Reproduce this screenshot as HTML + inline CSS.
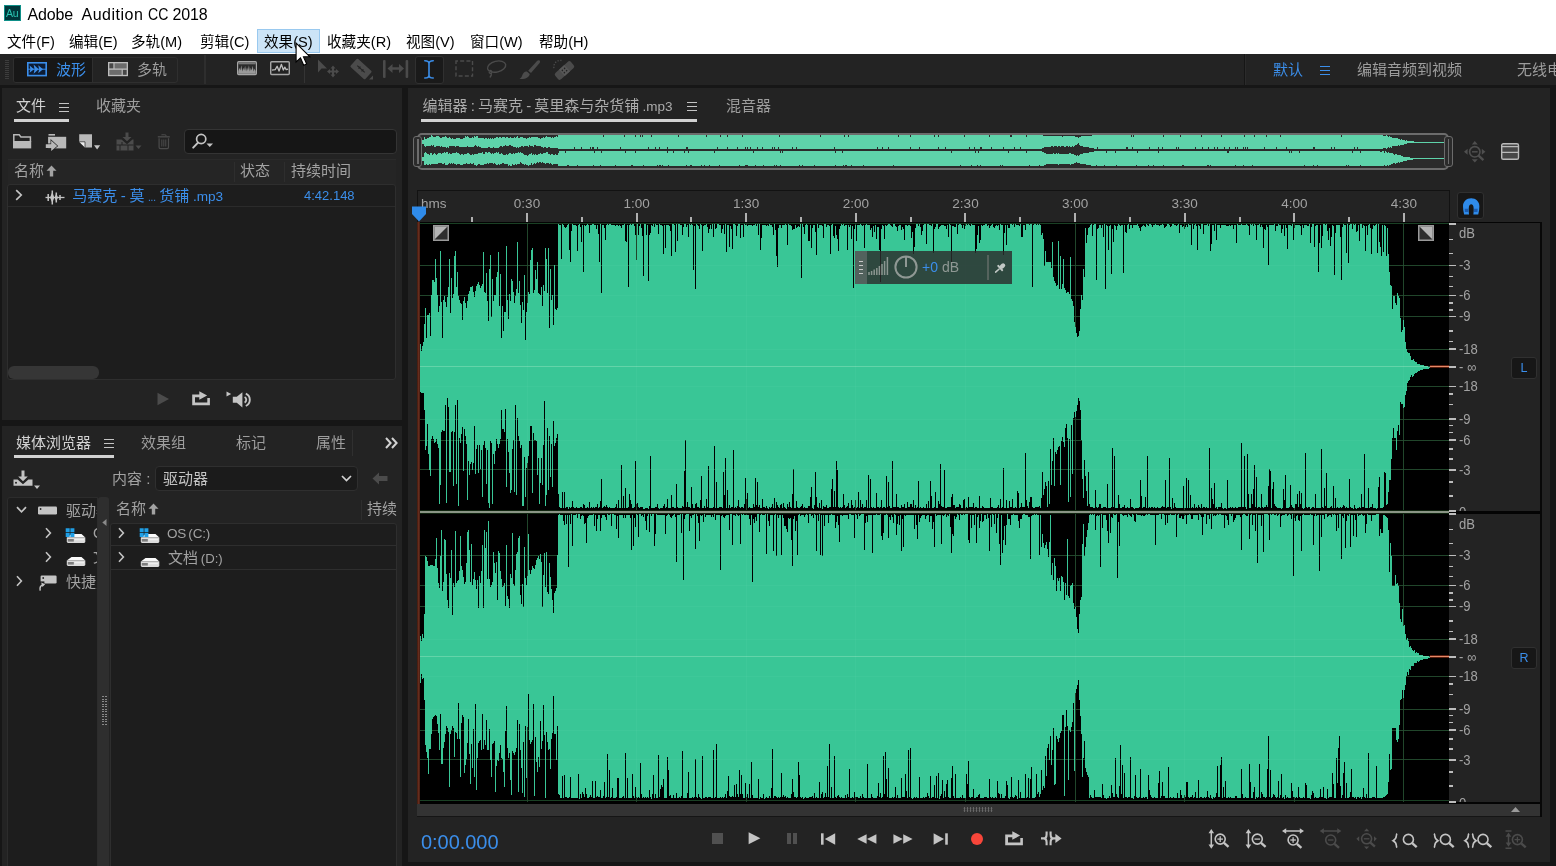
<!DOCTYPE html>
<html lang="zh-CN">
<head>
<meta charset="utf-8">
<title>Adobe Audition CC 2018</title>
<style>
*{box-sizing:border-box;margin:0;padding:0}
html,body{width:1556px;height:866px;overflow:hidden;background:#161616}
body{position:relative;font-family:"Liberation Sans","Noto Sans CJK SC",sans-serif;font-size:14px;color:#a2a2a2}
.a{position:absolute}
.t{position:absolute;white-space:nowrap;line-height:20px;height:20px}
.p{position:absolute;background:#232323}
.blue{color:#3b8eea}
svg{position:absolute;overflow:visible}
.menu .t{font-size:14.6px;color:#000;top:32px}
.tab{font-size:14.5px;color:#a2a2a2}
.hd{font-size:15px;color:#a2a2a2}
.rul .t{top:193.5px;font-size:13.5px;color:#a2a2a2}
.db{font-size:14.5px;color:#a2a2a2;line-height:24px;height:24px;transform:scaleX(0.9);transform-origin:0 50%}
.lat{font-size:13.5px}
</style>
</head>
<body>
<div id="root" style="position:absolute;left:0;top:0;width:1556px;height:866px;will-change:transform">
<!-- ===== title bar + menu ===== -->
<div class="a" id="titlebar" style="left:0;top:0;width:1556px;height:54px;background:#fff"></div>
<div class="a" style="left:3.5px;top:5px;width:17px;height:16px;background:#00363a;border:1px solid #0e8f88"></div>
<div class="t" style="left:6px;top:3px;font-size:10.5px;color:#2bc7b4;letter-spacing:-0.2px">Au</div>
<div class="t" id="title" style="left:0;top:5px;font-size:16px;color:#000;width:220px"><span style="position:absolute;left:27.6px;letter-spacing:-0.2px">Adobe </span><span style="position:absolute;left:81.5px;letter-spacing:0.5px">Audition </span><span style="position:absolute;left:147.6px;display:inline-block;transform:scaleX(0.88);transform-origin:0 50%">CC </span><span style="position:absolute;left:172.6px;letter-spacing:-0.15px">2018</span></div>
<div class="a" style="left:257px;top:29px;width:63px;height:24px;background:#cce4f7;border:1px solid #99c9ef"></div>
<div class="menu">
<div class="t" style="left:7px">文件(F)</div>
<div class="t" style="left:69px">编辑(E)</div>
<div class="t" style="left:131px">多轨(M)</div>
<div class="t" style="left:200px">剪辑(C)</div>
<div class="t" style="left:264px">效果(S)</div>
<div class="t" style="left:327px">收藏夹(R)</div>
<div class="t" style="left:406px">视图(V)</div>
<div class="t" style="left:470px">窗口(W)</div>
<div class="t" style="left:539px">帮助(H)</div>
</div>
<!-- ===== toolbar ===== -->
<div class="p" id="toolbar" style="left:0;top:54px;width:1556px;height:31px"></div>
<!--TOOLBAR-->
<!-- grip -->
<div class="a" style="left:5px;top:60px;width:4px;height:19px;background:repeating-linear-gradient(to bottom,#3d3d3d 0,#3d3d3d 1px,transparent 1px,transparent 2px)"></div>
<!-- view toggle group -->
<div class="a" style="left:13px;top:57px;width:165px;height:26px;border:1px solid #2f2f2f;border-radius:3px;background:#232323"></div>
<div class="a" style="left:14px;top:58px;width:79px;height:24px;background:#171717;border-right:1px solid #2f2f2f;border-radius:2px 0 0 2px"></div>
<svg style="left:26.5px;top:62px" width="20" height="14.4" viewBox="0 0 20 14.4">
 <rect x="0.8" y="0.8" width="18.4" height="12.8" fill="#0d1c33" stroke="#3b8eea" stroke-width="1.6"/>
 <path d="M1 7.2H19" stroke="#3b8eea" stroke-width="1"/>
 <path d="M2.6 3.6L7 7.2L2.6 10.8L3.4 7.2ZM6.6 2.6L11.6 7.2L6.6 11.8L7.6 7.2ZM11.2 3.2L16 7.2L11.2 11.2L12.2 7.2Z" fill="#3b8eea"/>
</svg>
<div class="t blue" style="left:56px;top:60px;font-size:15px">波形</div>
<svg style="left:108.3px;top:62.2px" width="20" height="14.2" viewBox="0 0 20 14.2">
 <rect x="0.65" y="0.65" width="18.7" height="12.9" fill="#6c6c6c" stroke="#bdbdbd" stroke-width="1.3"/>
 <rect x="1.6" y="1.6" width="3.8" height="4.8" fill="#474747"/><rect x="14.8" y="7.8" width="3.6" height="4.8" fill="#474747"/>
 <path d="M1 7.1H19M6 1V7.1M14.2 7.1V13.4" stroke="#bdbdbd" stroke-width="1.1" fill="none"/>
</svg>
<div class="t" style="left:137px;top:60px;font-size:15px;color:#9d9d9d">多轨</div>
<!-- separators -->
<div class="a" style="left:204px;top:55px;width:2px;height:29px;background:#2e2e2e"></div>
<div class="a" style="left:304px;top:57px;width:1px;height:26px;background:#343434"></div>
<!-- spectral frequency display -->
<svg style="left:236.5px;top:61px" width="20" height="14.3" viewBox="0 0 21 15">
 <rect x="0.75" y="0.75" width="19.5" height="13.5" rx="1" fill="#2a2a2a" stroke="#a6a6a6" stroke-width="1.5"/>
 <path d="M1.5 2.5H19.5V11L18.5 8L17.5 11L16.5 5L15.5 10L14.5 7L13.5 11L12.5 4.5L11.5 10L10.5 6.5L9.5 11L8.5 5L7.5 10L6.5 7L5.5 11L4.5 4.5L3.5 10L2.5 7L1.5 11Z" fill="#2a2a2a"/>
 <path d="M1.5 13.5V11L2.5 7L3.5 10L4.5 4.5L5.5 11L6.5 7L7.5 10L8.5 5L9.5 11L10.5 6.5L11.5 10L12.5 4.5L13.5 11L14.5 7L15.5 10L16.5 5L17.5 11L18.5 8L19.5 11V13.5Z" fill="#9a9a9a"/>
 <rect x="1.5" y="1.5" width="18" height="2" fill="#777"/>
</svg>
<!-- spectral pitch display -->
<svg style="left:269.5px;top:61px" width="20" height="14.3" viewBox="0 0 21 15">
 <rect x="0.75" y="0.75" width="19.5" height="13.5" rx="1" fill="#222" stroke="#a6a6a6" stroke-width="1.5"/>
 <path d="M2 9.5L5.5 9L7.5 5.5L9.5 10.5L12 3.5L14 9.5L15.5 6.5L17 9L19 8.5" fill="none" stroke="#bdbdbd" stroke-width="1.4" stroke-linejoin="round"/>
</svg>
<!-- move tool (disabled) -->
<svg style="left:317px;top:59px" width="23" height="19" viewBox="0 0 23 19">
 <path d="M1 0.5L1 13.5L4.5 9.5L10 9.5Z" fill="#4b4b4b"/>
 <path d="M16 6.5L18.5 9.5H17V11.5H19V10L22 12.5L19 15V13.5H17V15.5H18.5L16 18.5L13.5 15.5H15V13.5H13V15L10 12.5L13 10V11.5H15V9.5H13.5Z" fill="#4b4b4b"/>
</svg>
<!-- razor tool (disabled) -->
<svg style="left:351px;top:59px" width="23" height="21" viewBox="0 0 23 21">
 <g transform="rotate(42 10 10)"><rect x="0" y="4.5" width="20" height="11" rx="1.3" fill="#4b4b4b"/><path d="M5 10H15M8 8.6V11.4M12 8.6V11.4" stroke="#232323" stroke-width="1.2"/></g>
 <path d="M22 16.5V20.5H18Z" fill="#4b4b4b"/>
</svg>
<!-- slip tool (disabled) -->
<svg style="left:383px;top:60px" width="26" height="18" viewBox="0 0 26 18">
 <rect x="0" y="0" width="2.6" height="18" rx="1" fill="#4b4b4b"/><rect x="22.6" y="0" width="2.6" height="18" rx="1" fill="#4b4b4b"/>
 <path d="M4.5 8.5L9.5 4V7.3H16V4L21 8.5L16 13V9.7H9.5V13Z" fill="#4b4b4b"/>
</svg>
<!-- time selection tool (active) -->
<div class="a" style="left:415px;top:56px;width:29px;height:28px;background:#1a1a1a;border:1px solid #303030;border-radius:3px"></div>
<svg style="left:424px;top:60px" width="10" height="19" viewBox="0 0 10 19">
 <path d="M0.8 0.8C3.2 0.8 5 1.6 5 3.6C5 1.6 6.8 0.8 9.2 0.8M0.8 18C3.2 18 5 17.2 5 15.2C5 17.2 6.8 18 9.2 18M5 3.4V15.4" fill="none" stroke="#3b8eea" stroke-width="1.6" stroke-linecap="round"/>
</svg>
<!-- marquee (disabled) -->
<svg style="left:455px;top:60px" width="19" height="17" viewBox="0 0 19 17">
 <rect x="1" y="1" width="16.5" height="15" fill="none" stroke="#4b4b4b" stroke-width="1.4" stroke-dasharray="4 2.2" stroke-dashoffset="2"/>
</svg>
<!-- lasso (disabled) -->
<svg style="left:486px;top:60px" width="21" height="19" viewBox="0 0 21 19">
 <ellipse cx="10.6" cy="6.6" rx="9.3" ry="5.4" transform="rotate(-14 10.6 6.6)" fill="none" stroke="#4b4b4b" stroke-width="1.4"/>
 <path d="M3.3 10.6C5 10 6.6 11.4 5.6 12.8C4.6 14 2.8 13 3.3 11.6M5.4 13.2C5.6 15 5 16.5 3.8 17.6" fill="none" stroke="#4b4b4b" stroke-width="1.3"/>
</svg>
<!-- brush (disabled) -->
<svg style="left:519px;top:60px" width="22" height="20" viewBox="0 0 22 20">
 <path d="M20.5 0.5C21.3 1 21.2 2.2 20.6 3L12 13L9.2 10.8L18 1C18.8 0.2 19.8 0 20.5 0.5Z" fill="#4b4b4b"/>
 <path d="M8.2 11.8L10.8 14C10.2 17 7 19.5 0.5 19C3.5 17.5 3 14 5 12.5C6 11.6 7.3 11.3 8.2 11.8Z" fill="#4b4b4b"/>
</svg>
<!-- spot healing (disabled) -->
<svg style="left:552px;top:59px" width="23" height="21" viewBox="0 0 23 21">
 <g transform="rotate(-42 12.5 11.5)"><rect x="2" y="7.2" width="21" height="8.6" rx="2.4" fill="#4b4b4b"/><rect x="9" y="7.2" width="7" height="8.6" fill="#585858"/><circle cx="11" cy="10" r="0.8" fill="#232323"/><circle cx="14" cy="10" r="0.8" fill="#232323"/><circle cx="11" cy="13" r="0.8" fill="#232323"/><circle cx="14" cy="13" r="0.8" fill="#232323"/></g>
 <path d="M9.5 1.5A6.5 6.5 0 0 0 2 9.5" fill="none" stroke="#4b4b4b" stroke-width="1.3" stroke-dasharray="1.3 1.5"/>
</svg>
<!-- workspace switcher -->
<div class="a" style="left:1244px;top:54px;width:1px;height:31px;background:#161616"></div>
<div class="a" style="left:1245px;top:54px;width:1px;height:31px;background:#2b2b2b"></div>
<div class="t blue" style="left:1273px;top:60.3px;font-size:15px">默认</div>
<div class="a" style="left:1320px;top:66px;width:10px;height:9px;border-top:1.6px solid #3b8eea;border-bottom:1.6px solid #3b8eea"></div>
<div class="a" style="left:1320px;top:69.7px;width:10px;height:1.6px;background:#3b8eea"></div>
<div class="t" style="left:1357px;top:60.3px;font-size:15px;color:#9d9d9d">编辑音频到视频</div>
<div class="t" style="left:1517px;top:60.3px;font-size:15px;color:#9d9d9d">无线电</div>
<!--/TOOLBAR-->
<!-- ===== panels ===== -->
<div class="p" id="files" style="left:2px;top:88px;width:400px;height:332px"></div>
<div class="p" id="media" style="left:2px;top:426px;width:400px;height:440px"></div>
<div class="p" id="editor" style="left:408px;top:88px;width:1142px;height:774px"></div>
<!--FILES-->
<!-- tabs -->
<div class="t" style="left:16px;top:96px;font-size:15px;color:#d2d2d2">文件</div>
<div class="a" style="left:59px;top:103px;width:10px;height:9px;border-top:1.8px solid #c4c4c4;border-bottom:1.8px solid #c4c4c4"></div>
<div class="a" style="left:59px;top:106.7px;width:10px;height:1.8px;background:#c4c4c4"></div>
<div class="a" style="left:14px;top:119px;width:55px;height:3px;background:#d2d2d2"></div>
<div class="t" style="left:96px;top:96px;font-size:15px;color:#9d9d9d">收藏夹</div>
<!-- file toolbar -->
<svg style="left:13px;top:134px" width="19" height="15" viewBox="0 0 19 15">
 <path d="M0.8 8V0.8H6.2L7.9 3H17.4V8" fill="none" stroke="#b9b9b9" stroke-width="1.5"/>
 <path d="M0 7H18.2V14.4H0Z" fill="#b9b9b9"/>
</svg>
<svg style="left:45px;top:133px" width="22" height="19" viewBox="0 0 22 19">
 <rect x="3.5" y="1" width="6.5" height="1.6" fill="#b9b9b9"/><path d="M3.1 3.8H21.2V15.4H3.1Z" fill="#b9b9b9"/>
 <path d="M0.8 11.2H6.2V7.4L12.2 13L6.2 18V15H0.8Z" fill="#b9b9b9" stroke="#232323" stroke-width="1.3" paint-order="stroke"/>
</svg>
<svg style="left:79px;top:133.6px" width="23" height="17" viewBox="0 0 23 17">
 <path d="M0.2 0.2H13V13.6H6L0.2 7.8Z" fill="#b9b9b9"/><path d="M0.2 7.8H6V13.6Z" fill="#ececec"/><path d="M0.2 7.8H6V13.6" fill="none" stroke="#232323" stroke-width="0.7"/>
 <path d="M15 11.3H21.2L18.1 15.5Z" fill="#c4c4c4"/>
</svg>
<svg style="left:116px;top:132px" width="26" height="20" viewBox="0 0 26 20">
 <path d="M9.5 0.5H12.5V5H15.5L11 9.2L6.5 5H9.5Z" fill="#4b4b4b"/>
 <path d="M0.5 7.5H5.5L11 12.2L16.5 7.5H17.5V18.5H0.5Z" fill="#4b4b4b"/>
 <path d="M0.5 13H17.5M6 10V13M12 13V18.5M4 13V18.5" stroke="#232323" stroke-width="1"/>
 <path d="M19.5 13.5H25.5L22.5 17Z" fill="#4b4b4b"/>
</svg>
<svg style="left:157.4px;top:134.2px" width="13.6" height="15.4" viewBox="0 0 15 18">
 <path d="M5 1.5C5 0.6 10 0.6 10 1.5V3" fill="none" stroke="#4b4b4b" stroke-width="1.3"/>
 <path d="M0.5 3.3H14.5" stroke="#4b4b4b" stroke-width="1.6"/>
 <path d="M2 5V15.5C2 16.6 2.6 17 3.5 17H11.5C12.4 17 13 16.6 13 15.5V5" fill="none" stroke="#4b4b4b" stroke-width="1.4"/>
 <path d="M5.2 6.5V14.5M7.5 6.5V14.5M9.8 6.5V14.5" stroke="#4b4b4b" stroke-width="1.2"/>
</svg>
<!-- search box -->
<div class="a" style="left:184px;top:129px;width:213px;height:25px;background:#161616;border:1px solid #343434;border-radius:4px"></div>
<svg style="left:192px;top:133px" width="22" height="17" viewBox="0 0 22 17">
 <circle cx="9.2" cy="6" r="4.6" fill="none" stroke="#c4c4c4" stroke-width="1.7"/><path d="M6 9.6L1.2 14.6" stroke="#c4c4c4" stroke-width="2" stroke-linecap="round"/>
 <path d="M14.5 10.5H21L17.75 14Z" fill="#c4c4c4"/>
</svg>
<!-- list header -->
<div class="a" style="left:8px;top:159px;width:388px;height:26px;background:#252525;border-top:1px solid #2a2a2a"></div>
<div class="t hd" style="left:14px;top:161px">名称</div>
<svg style="left:46px;top:165px" width="11" height="12" viewBox="0 0 11 12"><path d="M5.5 0.5L10.5 5.8H7.2V11.5H3.8V5.8H0.5Z" fill="#a2a2a2"/></svg>
<div class="a" style="left:234px;top:162px;width:1px;height:20px;background:#2e2e2e"></div>
<div class="a" style="left:284px;top:162px;width:1px;height:20px;background:#2e2e2e"></div>
<div class="t hd" style="left:240px;top:161px">状态</div>
<div class="t hd" style="left:291px;top:161px">持续时间</div>
<!-- list body -->
<div class="a" style="left:7px;top:184px;width:389px;height:196px;background:#1d1d1d;border:1px solid #2e2e2e;border-radius:3px"></div>
<div class="a" style="left:8px;top:206px;width:387px;height:1px;background:#2b2b2b"></div>
<svg style="left:15px;top:189px" width="8" height="12" viewBox="0 0 8 12"><path d="M1.2 1.2L6.2 6L1.2 10.8" fill="none" stroke="#c4c4c4" stroke-width="1.7"/></svg>
<svg style="left:45px;top:190px" width="20" height="15" viewBox="0 0 20 15">
 <path d="M0.5 7.5H19.5" stroke="#c4c4c4" stroke-width="1.3"/>
 <path d="M3.2 4V11M7.3 0.5V14.5M11.3 2.5V12.5M15 5V10" stroke="#c4c4c4" stroke-width="1.5"/>
 <path d="M5 7.5L7.3 2L9.3 7.5L7.3 13ZM9.5 7.5L11.3 3.5L13 7.5L11.3 11.5Z" fill="#c4c4c4"/>
</svg>
<div class="t blue" style="left:72.3px;top:186px;font-size:15px;word-spacing:-0.6px">马赛克 - 莫 <span style="font-size:10px;letter-spacing:-0.2px">...</span> 货铺 <span style="font-size:13.6px">.mp3</span></div>
<div class="t blue" style="left:304px;top:186px;font-size:13px">4:42.148</div>
<!-- scroll thumb -->
<div class="a" style="left:8px;top:366px;width:91px;height:13px;background:#363636;border-radius:6px"></div>
<!-- preview transport -->
<svg style="left:157px;top:392px" width="13" height="14" viewBox="0 0 13 14"><path d="M0.5 0.8L12 7L0.5 13.2Z" fill="#4b4b4b"/></svg>
<svg style="left:191.6px;top:390.8px" width="19" height="15" viewBox="0 0 19 15"><path d="M0.2 14.2V3.4H7.3V0.2L15.1 4.5L7.3 8.7V6.3H3V11.5H15.3V6.9H17.9V14.2Z" fill="#c4c4c4"/></svg>
<svg style="left:226px;top:391px" width="26" height="17" viewBox="0 0 26 17">
 <path d="M0.5 0.5L5.2 3L0.5 5.5Z" fill="#c4c4c4"/>
 <path d="M6.8 5.8H10.8L16.4 1.2V16.4L10.8 11.8H6.8Z" fill="#c4c4c4"/>
 <path d="M18.6 6A3.2 3.2 0 0 1 18.6 11.6M19.8 2.6A6.8 6.8 0 0 1 19.8 15" fill="none" stroke="#c4c4c4" stroke-width="1.9"/>
</svg>
<!--/FILES-->
<!--MEDIA-->
<!-- tabs -->
<div class="t" style="left:16px;top:433px;font-size:15px;color:#d2d2d2">媒体浏览器</div>
<div class="a" style="left:104px;top:439px;width:10px;height:9px;border-top:1.8px solid #c4c4c4;border-bottom:1.8px solid #c4c4c4"></div>
<div class="a" style="left:104px;top:442.7px;width:10px;height:1.8px;background:#c4c4c4"></div>
<div class="a" style="left:14px;top:455px;width:100px;height:3px;background:#d2d2d2"></div>
<div class="t" style="left:141px;top:433px;font-size:15px;color:#9d9d9d">效果组</div>
<div class="t" style="left:236px;top:433px;font-size:15px;color:#9d9d9d">标记</div>
<div class="t" style="left:316px;top:433px;font-size:15px;color:#9d9d9d">属性</div>
<div class="a" style="left:352px;top:430px;width:1px;height:26px;background:#303030"></div>
<svg style="left:385px;top:437px" width="13" height="12" viewBox="0 0 13 12"><path d="M1 1L5.6 6L1 11M7 1L11.6 6L7 11" fill="none" stroke="#d2d2d2" stroke-width="2"/></svg>
<!-- import / contents row -->
<svg style="left:13px;top:470px" width="28" height="20" viewBox="0 0 28 20">
 <path d="M8.5 0.5H11.5V6.5H14.8L10 11.2L5.2 6.5H8.5Z" fill="#c4c4c4"/>
 <path d="M0.5 9.5H4.6L10 14.2L15.4 9.5H19.5V15.8H0.5Z" fill="#c4c4c4"/><circle cx="3" cy="12.8" r="1" fill="#232323"/>
 <path d="M21 15.5H27L24 19Z" fill="#c4c4c4"/>
</svg>
<div class="t" style="left:112px;top:469px;font-size:15px;color:#a2a2a2">内容 :</div>
<div class="a" style="left:155px;top:466px;width:203px;height:25px;background:#1b1b1b;border:1px solid #2f2f2f;border-radius:4px"></div>
<div class="t" style="left:163px;top:469px;font-size:15px;color:#c4c4c4">驱动器</div>
<svg style="left:341px;top:475px" width="11" height="7" viewBox="0 0 11 7"><path d="M1 1L5.5 5.5L10 1" fill="none" stroke="#d2d2d2" stroke-width="1.7"/></svg>
<svg style="left:372px;top:472px" width="16" height="13" viewBox="0 0 16 13"><path d="M0.5 6.5L7 0.5V4H15.5V9H7V12.5Z" fill="#4b4b4b"/></svg>
<!-- tree -->
<div class="a" style="left:7px;top:497px;width:91px;height:372px;background:#1d1d1d;border:1px solid #2c2c2c;border-radius:3px 0 0 0"></div>
<div class="a" style="left:98px;top:497px;width:11px;height:372px;background:#2e2e2e;border-radius:3px 3px 0 0"></div>
<svg style="left:102px;top:519px" width="5" height="7" viewBox="0 0 5 7"><path d="M4.5 0L4.5 7L0.3 3.5Z" fill="#8a8a8a"/></svg>
<div class="a" style="left:102px;top:696px;width:2px;height:30px;background:repeating-linear-gradient(to bottom,#8a8a8a 0,#8a8a8a 1px,transparent 1px,transparent 2.5px)"></div><div class="a" style="left:105px;top:696px;width:1.5px;height:30px;background:repeating-linear-gradient(to bottom,#8a8a8a 0,#8a8a8a 1px,transparent 1px,transparent 2.5px)"></div>
<svg style="left:16px;top:506px" width="11" height="8" viewBox="0 0 11 8"><path d="M1 1.2L5.5 5.8L10 1.2" fill="none" stroke="#c4c4c4" stroke-width="1.7"/></svg>
<svg style="left:38px;top:505.6px" width="20" height="9" viewBox="0 0 20 9"><rect x="0" y="0.5" width="19" height="8" rx="1.2" fill="#c4c4c4"/><circle cx="2.6" cy="3" r="0.9" fill="#232323"/></svg>
<div class="t" style="left:66px;top:500.5px;font-size:15px;width:31px;overflow:hidden">驱动器</div>
<svg style="left:45px;top:527px" width="7" height="12" viewBox="0 0 7 12"><path d="M1 1.2L5.4 6L1 10.8" fill="none" stroke="#c4c4c4" stroke-width="1.6"/></svg>
<svg style="left:65px;top:528px" width="21" height="15" viewBox="0 0 21 15">
 <path d="M6.5 5.9H16.5L20.3 9.6H1.8Z" fill="#fafafa"/><path d="M1.8 9.6H20.3V13.6Q20.3 15 19 15H3.1Q1.8 15 1.8 13.6Z" fill="#dcdcdc"/><rect x="2.8" y="11" width="6" height="2.6" fill="#7d7d7d"/><rect x="9.5" y="11.2" width="9.5" height="1" fill="#f4f4f4"/>
 <path d="M0.7 0.2H4.7V4.2H0.7ZM5.4 0.2H9.4V4.2H5.4ZM0.7 4.9H4.7V8.9H0.7ZM5.4 4.9H9.4V8.9H5.4Z" fill="#1f9fe6"/>
</svg>
<div class="t" style="left:93px;top:523px;font-size:14.5px;width:4px;overflow:hidden">OS</div>
<svg style="left:45px;top:551px" width="7" height="12" viewBox="0 0 7 12"><path d="M1 1.2L5.4 6L1 10.8" fill="none" stroke="#c4c4c4" stroke-width="1.6"/></svg>
<svg style="left:65px;top:551px" width="21" height="15" viewBox="0 0 21 15">
 <path d="M6.5 5.9H16.5L20.3 9.6H1.8Z" fill="#fafafa"/><path d="M1.8 9.6H20.3V13.6Q20.3 15 19 15H3.1Q1.8 15 1.8 13.6Z" fill="#dcdcdc"/><rect x="2.8" y="11" width="6" height="2.6" fill="#7d7d7d"/><rect x="9.5" y="11.2" width="9.5" height="1" fill="#f4f4f4"/>
</svg>
<div class="t" style="left:93px;top:547px;font-size:15px;width:4px;overflow:hidden">文档</div>
<svg style="left:16px;top:575px" width="7" height="12" viewBox="0 0 7 12"><path d="M1 1.2L5.4 6L1 10.8" fill="none" stroke="#c4c4c4" stroke-width="1.6"/></svg>
<svg style="left:38px;top:575px" width="20" height="17" viewBox="0 0 20 17">
 <rect x="2.6" y="0.6" width="16" height="7.8" rx="1.2" fill="#c4c4c4"/><circle cx="5.2" cy="3" r="0.9" fill="#232323"/>
 <path d="M0.6 6.4H6.4V11H0.6Z" fill="#1d1d1d"/>
 <path d="M2.2 15.6C1.4 12.4 2.6 10 5.6 9.4" fill="none" stroke="#c4c4c4" stroke-width="1.5"/><path d="M3.2 7.4L7.2 9.2L4.4 12Z" fill="#c4c4c4"/>
</svg>
<div class="t" style="left:66px;top:572px;font-size:15px;width:31px;overflow:hidden">快捷方式</div>
<!-- list -->
<div class="t hd" style="left:116px;top:499px">名称</div>
<svg style="left:148px;top:503px" width="11" height="12" viewBox="0 0 11 12"><path d="M5.5 0.5L10.5 5.8H7.2V11.5H3.8V5.8H0.5Z" fill="#a2a2a2"/></svg>
<div class="a" style="left:361px;top:500px;width:1px;height:20px;background:#2e2e2e"></div>
<div class="t hd" style="left:367px;top:499px;width:30px;overflow:hidden">持续时间</div>
<div class="a" style="left:110px;top:522.5px;width:287px;height:347px;background:#1d1d1d;border:1px solid #2e2e2e;border-radius:3px 3px 0 0"></div>
<div class="a" style="left:111px;top:545px;width:285px;height:1px;background:#2e2e2e"></div>
<div class="a" style="left:111px;top:569px;width:285px;height:1px;background:#2e2e2e"></div>
<svg style="left:118px;top:527px" width="7" height="12" viewBox="0 0 7 12"><path d="M1 1.2L5.4 6L1 10.8" fill="none" stroke="#c4c4c4" stroke-width="1.6"/></svg>
<svg style="left:139px;top:528px" width="21" height="15" viewBox="0 0 21 15">
 <path d="M6.5 5.9H16.5L20.3 9.6H1.8Z" fill="#fafafa"/><path d="M1.8 9.6H20.3V13.6Q20.3 15 19 15H3.1Q1.8 15 1.8 13.6Z" fill="#dcdcdc"/><rect x="2.8" y="11" width="6" height="2.6" fill="#7d7d7d"/><rect x="9.5" y="11.2" width="9.5" height="1" fill="#f4f4f4"/>
 <path d="M0.7 0.2H4.7V4.2H0.7ZM5.4 0.2H9.4V4.2H5.4ZM0.7 4.9H4.7V8.9H0.7ZM5.4 4.9H9.4V8.9H5.4Z" fill="#1f9fe6"/>
</svg>
<div class="t" style="left:167px;top:524px;font-size:13.5px;color:#a2a2a2;word-spacing:-1.5px;letter-spacing:-0.15px">OS (C:)</div>
<svg style="left:118px;top:551px" width="7" height="12" viewBox="0 0 7 12"><path d="M1 1.2L5.4 6L1 10.8" fill="none" stroke="#c4c4c4" stroke-width="1.6"/></svg>
<svg style="left:139px;top:552px" width="21" height="15" viewBox="0 0 21 15">
 <path d="M6.5 5.9H16.5L20.3 9.6H1.8Z" fill="#fafafa"/><path d="M1.8 9.6H20.3V13.6Q20.3 15 19 15H3.1Q1.8 15 1.8 13.6Z" fill="#dcdcdc"/><rect x="2.8" y="11" width="6" height="2.6" fill="#7d7d7d"/><rect x="9.5" y="11.2" width="9.5" height="1" fill="#f4f4f4"/>
</svg>
<div class="t" style="left:168px;top:548px;font-size:15px;color:#a2a2a2;word-spacing:-1.4px">文档 <span style="font-size:13.2px">(D:)</span></div>
<!--/MEDIA-->
<!--EDITOR-->
<!-- tabs -->
<div class="t" style="left:422.5px;top:96px;font-size:15px;color:#ababab;word-spacing:-1px">编辑器 : 马赛克 - 莫里森与杂货铺 <span class="lat">.mp3</span></div>
<div class="a" style="left:687px;top:102px;width:10px;height:9px;border-top:1.8px solid #c4c4c4;border-bottom:1.8px solid #c4c4c4"></div>
<div class="a" style="left:687px;top:105.7px;width:10px;height:1.8px;background:#c4c4c4"></div>
<div class="a" style="left:421px;top:119px;width:276px;height:3px;background:#d2d2d2"></div>
<div class="t" style="left:726px;top:96px;font-size:15px;color:#9d9d9d">混音器</div>
<!-- overview navigator -->
<div class="a" style="left:417px;top:133px;width:1032px;height:37px;background:#2b2b2b;border:2px solid #6c6c6c;border-radius:5px"></div>
<svg id="ovw" style="left:0;top:0" width="1556" height="866" viewBox="0 0 1556 866" shape-rendering="crispEdges">
<path d="M421 142.0V140.0 h1V140.0 h1V140.0 h1V137.0 h1V138.5 h1V138.5 h1V138.0 h1V138.0 h1V136.5 h1V136.5 h1V135.0 h1V135.5 h1V136.5 h1V136.5 h1V136.5 h1V136.0 h1V135.5 h1V136.0 h1V136.5 h1V137.5 h1V137.5 h1V137.0 h1V137.0 h1V136.5 h1V136.0 h1V137.0 h1V137.5 h1V137.5 h1V137.0 h1V137.5 h1V139.0 h1V137.5 h1V138.5 h1V138.5 h1V138.5 h1V138.0 h1V138.0 h1V137.5 h1V137.5 h1V138.5 h1V138.5 h1V138.5 h1V138.0 h1V137.5 h1V136.0 h1V136.5 h1V136.0 h1V136.5 h1V138.0 h1V137.5 h1V137.5 h1V137.0 h1V138.0 h1V136.0 h1V137.0 h1V135.5 h1V135.5 h1V137.5 h1V138.0 h1V138.0 h1V138.0 h1V137.5 h1V137.5 h1V138.5 h1V138.0 h1V137.5 h1V138.5 h1V138.0 h1V139.0 h1V137.5 h1V139.0 h1V137.5 h1V138.5 h1V137.5 h1V137.5 h1V136.5 h1V136.5 h1V137.5 h1V136.5 h1V137.0 h1V138.0 h1V137.0 h1V136.5 h1V137.0 h1V138.0 h1V136.5 h1V137.0 h1V137.5 h1V138.0 h1V137.0 h1V137.5 h1V138.0 h1V137.5 h1V136.5 h1V137.5 h1V137.0 h1V136.0 h1V137.5 h1V137.5 h1V137.0 h1V137.0 h1V137.0 h1V137.5 h1V137.5 h1V138.0 h1V138.5 h1V138.0 h1V137.5 h1V137.0 h1V138.0 h1V137.0 h1V137.0 h1V136.5 h1V137.0 h1V137.0 h1V137.0 h1V137.0 h1V137.5 h1V137.5 h1V139.0 h1V138.0 h1V137.5 h1V137.0 h1V137.5 h1V137.0 h1V136.0 h1V137.0 h1V137.0 h1V137.0 h1V136.5 h1V137.5 h1V137.0 h1V137.5 h1V137.0 h1V137.0 h1V136.0 h1V137.0 h1V135.0 h1V135.0 h1V135.0 h1V135.0 h1V135.0 h1V135.0 h1V135.0 h1V135.0 h1V135.0 h1V135.0 h1V135.0 h1V135.0 h1V135.0 h1V135.0 h1V135.0 h1V135.0 h1V135.0 h1V135.0 h1V135.0 h1V135.0 h1V135.0 h1V135.0 h1V135.0 h1V135.0 h1V135.0 h1V135.0 h1V135.0 h1V135.0 h1V135.0 h1V135.0 h1V135.0 h1V135.0 h1V135.0 h1V135.0 h1V135.0 h1V135.0 h1V135.0 h1V135.0 h1V135.0 h1V135.0 h1V135.0 h1V135.0 h1V135.0 h1V135.0 h1V135.0 h1V136.5 h1V135.0 h1V135.0 h1V135.0 h1V135.0 h1V135.0 h1V135.0 h1V135.0 h1V135.0 h1V135.0 h1V135.0 h1V135.0 h1V135.0 h1V135.0 h1V135.0 h1V135.0 h1V135.0 h1V135.0 h1V135.0 h1V135.0 h1V135.0 h1V136.5 h1V135.0 h1V135.0 h1V135.0 h1V135.0 h1V135.0 h1V135.0 h1V135.0 h1V135.0 h1V135.0 h1V135.0 h1V136.5 h1V135.0 h1V135.0 h1V135.0 h1V135.0 h1V136.5 h1V135.0 h1V136.5 h1V135.0 h1V135.0 h1V135.0 h1V135.0 h1V135.0 h1V135.0 h1V135.0 h1V135.0 h1V136.5 h1V135.0 h1V135.0 h1V135.0 h1V135.0 h1V135.0 h1V135.0 h1V135.0 h1V135.0 h1V135.0 h1V135.0 h1V135.0 h1V135.0 h1V135.0 h1V135.0 h1V135.0 h1V135.0 h1V135.0 h1V135.0 h1V135.0 h1V135.0 h1V135.0 h1V135.0 h1V135.0 h1V135.0 h1V135.0 h1V135.0 h1V136.5 h1V135.0 h1V135.0 h1V135.0 h1V135.0 h1V135.0 h1V135.0 h1V135.0 h1V135.0 h1V135.0 h1V135.0 h1V135.0 h1V135.0 h1V135.0 h1V135.0 h1V135.0 h1V135.0 h1V135.0 h1V135.0 h1V135.0 h1V135.0 h1V135.0 h1V135.0 h1V135.0 h1V135.0 h1V135.0 h1V135.0 h1V135.0 h1V136.5 h1V135.0 h1V135.0 h1V135.0 h1V135.0 h1V135.0 h1V135.0 h1V135.0 h1V135.0 h1V135.0 h1V135.0 h1V135.0 h1V135.0 h1V135.0 h1V136.5 h1V135.0 h1V135.0 h1V135.0 h1V135.0 h1V135.0 h1V135.0 h1V136.5 h1V135.0 h1V135.0 h1V135.0 h1V135.0 h1V135.0 h1V135.0 h1V135.0 h1V135.0 h1V135.0 h1V135.0 h1V135.0 h1V135.0 h1V135.0 h1V135.0 h1V136.5 h1V135.0 h1V135.0 h1V135.0 h1V135.0 h1V135.0 h1V135.0 h1V135.0 h1V135.0 h1V135.0 h1V135.0 h1V135.0 h1V135.0 h1V135.0 h1V135.0 h1V135.0 h1V135.0 h1V135.0 h1V135.0 h1V135.0 h1V135.0 h1V135.0 h1V135.0 h1V135.0 h1V135.0 h1V135.0 h1V135.0 h1V135.0 h1V135.0 h1V135.0 h1V135.0 h1V135.0 h1V135.0 h1V135.0 h1V135.0 h1V135.0 h1V135.0 h1V136.5 h1V135.0 h1V135.0 h1V135.0 h1V135.0 h1V135.0 h1V135.0 h1V135.0 h1V135.0 h1V135.0 h1V135.0 h1V135.0 h1V135.0 h1V135.0 h1V135.0 h1V135.0 h1V135.0 h1V135.0 h1V135.0 h1V135.0 h1V135.0 h1V135.0 h1V135.0 h1V135.0 h1V135.0 h1V135.0 h1V135.0 h1V135.0 h1V135.0 h1V135.0 h1V135.0 h1V135.0 h1V135.0 h1V135.0 h1V135.0 h1V135.0 h1V135.0 h1V135.0 h1V135.0 h1V135.0 h1V135.0 h1V136.5 h1V135.0 h1V135.0 h1V135.0 h1V135.0 h1V135.0 h1V135.0 h1V135.0 h1V135.0 h1V135.0 h1V135.0 h1V135.0 h1V135.0 h1V135.0 h1V135.0 h1V135.0 h1V135.0 h1V135.0 h1V135.0 h1V135.0 h1V135.0 h1V135.0 h1V135.0 h1V135.0 h1V136.5 h1V135.0 h1V135.0 h1V135.0 h1V136.5 h1V135.0 h1V135.0 h1V135.0 h1V135.0 h1V135.0 h1V135.0 h1V135.0 h1V135.0 h1V135.0 h1V135.0 h1V135.0 h1V135.0 h1V135.0 h1V135.0 h1V135.0 h1V135.0 h1V135.0 h1V135.0 h1V135.0 h1V135.0 h1V135.0 h1V135.0 h1V135.0 h1V135.0 h1V135.0 h1V135.0 h1V135.0 h1V135.0 h1V135.0 h1V135.0 h1V135.0 h1V135.0 h1V135.0 h1V135.0 h1V135.0 h1V135.0 h1V135.0 h1V135.0 h1V135.0 h1V135.0 h1V135.0 h1V135.0 h1V135.0 h1V135.0 h1V135.0 h1V135.0 h1V135.0 h1V135.0 h1V135.0 h1V136.5 h1V135.0 h1V135.0 h1V135.0 h1V135.0 h1V135.0 h1V135.0 h1V135.0 h1V135.0 h1V135.0 h1V135.0 h1V135.0 h1V136.5 h1V135.0 h1V135.0 h1V135.0 h1V135.0 h1V135.0 h1V135.0 h1V135.0 h1V135.0 h1V135.0 h1V135.0 h1V135.0 h1V135.0 h1V135.0 h1V135.0 h1V135.0 h1V135.0 h1V135.0 h1V135.0 h1V135.0 h1V135.0 h1V135.0 h1V135.0 h1V135.0 h1V136.5 h1V135.0 h1V135.0 h1V135.0 h1V136.5 h1V135.0 h1V135.0 h1V135.0 h1V135.0 h1V135.0 h1V135.0 h1V135.0 h1V135.0 h1V135.0 h1V135.0 h1V135.0 h1V135.0 h1V135.0 h1V135.0 h1V135.0 h1V135.0 h1V135.0 h1V135.0 h1V135.0 h1V135.0 h1V135.0 h1V135.0 h1V135.0 h1V135.0 h1V135.0 h1V136.5 h1V135.0 h1V135.0 h1V135.0 h1V135.0 h1V135.0 h1V135.0 h1V135.0 h1V135.0 h1V135.0 h1V135.0 h1V135.0 h1V135.0 h1V135.0 h1V135.0 h1V135.0 h1V135.0 h1V135.0 h1V135.0 h1V135.0 h1V135.0 h1V135.0 h1V135.0 h1V135.0 h1V135.0 h1V136.5 h1V135.0 h1V135.0 h1V135.0 h1V135.0 h1V135.0 h1V135.0 h1V135.0 h1V135.0 h1V135.0 h1V135.0 h1V135.0 h1V135.0 h1V135.0 h1V135.0 h1V135.0 h1V135.0 h1V135.0 h1V135.0 h1V135.0 h1V135.0 h1V136.5 h1V136.5 h1V135.0 h1V135.0 h1V135.0 h1V135.0 h1V135.0 h1V135.0 h1V135.0 h1V135.0 h1V135.0 h1V135.0 h1V135.0 h1V135.0 h1V135.0 h1V135.0 h1V136.5 h1V135.0 h1V135.0 h1V135.0 h1V135.0 h1V135.0 h1V135.0 h1V135.0 h1V135.0 h1V135.0 h1V135.0 h1V135.0 h1V135.0 h1V135.0 h1V135.0 h1V135.0 h1V135.0 h1V135.5 h1V135.5 h1V136.0 h1V136.0 h1V136.0 h1V136.0 h1V136.0 h1V136.0 h1V136.0 h1V136.0 h1V136.0 h1V136.0 h1V136.0 h1V136.0 h1V136.0 h1V136.0 h1V136.0 h1V136.0 h1V136.0 h1V136.5 h1V136.0 h1V136.0 h1V136.0 h1V136.0 h1V136.0 h1V136.0 h1V136.0 h1V136.0 h1V135.5 h1V136.0 h1V136.0 h1V136.0 h1V136.5 h1V136.5 h1V137.0 h1V137.5 h1V136.5 h1V136.5 h1V136.0 h1V136.0 h1V136.0 h1V136.0 h1V136.0 h1V135.5 h1V135.5 h1V135.5 h1V135.5 h1V135.5 h1V135.5 h1V135.0 h1V135.0 h1V135.0 h1V135.0 h1V135.0 h1V135.0 h1V135.0 h1V135.0 h1V135.0 h1V135.0 h1V135.0 h1V135.0 h1V135.0 h1V135.0 h1V135.0 h1V135.0 h1V135.0 h1V135.0 h1V135.0 h1V135.0 h1V135.0 h1V135.0 h1V135.0 h1V135.0 h1V135.0 h1V135.0 h1V135.0 h1V135.0 h1V135.0 h1V135.0 h1V135.0 h1V135.0 h1V135.0 h1V135.0 h1V135.0 h1V135.0 h1V135.0 h1V135.0 h1V135.0 h1V136.5 h1V135.0 h1V136.5 h1V135.0 h1V135.0 h1V135.0 h1V135.0 h1V135.0 h1V135.0 h1V135.0 h1V135.0 h1V135.0 h1V135.0 h1V135.0 h1V135.0 h1V135.0 h1V135.0 h1V135.0 h1V135.0 h1V135.0 h1V135.0 h1V135.0 h1V135.0 h1V135.0 h1V135.0 h1V135.0 h1V135.0 h1V135.0 h1V135.0 h1V135.0 h1V135.0 h1V135.0 h1V136.5 h1V135.0 h1V135.0 h1V135.0 h1V135.0 h1V135.0 h1V135.0 h1V135.0 h1V135.0 h1V135.0 h1V135.0 h1V135.0 h1V135.0 h1V135.0 h1V135.0 h1V135.0 h1V135.0 h1V136.5 h1V135.0 h1V135.0 h1V135.0 h1V135.0 h1V135.0 h1V135.0 h1V135.0 h1V135.0 h1V135.0 h1V135.0 h1V135.0 h1V135.0 h1V135.0 h1V135.0 h1V135.0 h1V135.0 h1V135.0 h1V135.0 h1V135.0 h1V135.0 h1V136.5 h1V135.0 h1V135.0 h1V135.0 h1V135.0 h1V135.0 h1V135.0 h1V135.0 h1V135.0 h1V135.0 h1V135.0 h1V135.0 h1V135.0 h1V135.0 h1V135.0 h1V135.0 h1V135.0 h1V135.0 h1V135.0 h1V135.0 h1V136.5 h1V135.0 h1V135.0 h1V135.0 h1V135.0 h1V135.0 h1V135.0 h1V135.0 h1V135.0 h1V135.0 h1V135.0 h1V135.0 h1V135.0 h1V135.0 h1V135.0 h1V135.0 h1V135.0 h1V135.0 h1V135.0 h1V135.0 h1V135.0 h1V135.0 h1V135.0 h1V136.5 h1V135.0 h1V135.0 h1V135.0 h1V135.0 h1V135.0 h1V135.0 h1V135.0 h1V135.0 h1V135.0 h1V136.5 h1V135.0 h1V135.0 h1V135.0 h1V135.0 h1V135.0 h1V135.0 h1V135.0 h1V135.0 h1V135.0 h1V135.0 h1V135.0 h1V136.5 h1V135.0 h1V135.0 h1V135.0 h1V135.0 h1V135.0 h1V135.0 h1V135.0 h1V135.0 h1V135.0 h1V135.0 h1V135.0 h1V135.0 h1V135.0 h1V136.5 h1V135.0 h1V135.0 h1V135.0 h1V135.0 h1V135.0 h1V135.0 h1V135.0 h1V135.0 h1V135.0 h1V135.0 h1V135.0 h1V135.0 h1V135.0 h1V135.0 h1V135.0 h1V135.0 h1V135.0 h1V135.0 h1V135.0 h1V135.0 h1V135.0 h1V135.0 h1V135.0 h1V135.0 h1V135.0 h1V135.0 h1V135.0 h1V135.0 h1V135.0 h1V135.0 h1V135.0 h1V135.0 h1V135.0 h1V135.0 h1V135.0 h1V135.0 h1V135.0 h1V135.0 h1V135.0 h1V135.0 h1V135.0 h1V135.0 h1V135.0 h1V135.0 h1V135.0 h1V135.0 h1V135.0 h1V135.0 h1V135.0 h1V135.0 h1V135.0 h1V135.0 h1V135.0 h1V135.0 h1V135.0 h1V135.0 h1V135.0 h1V135.0 h1V135.0 h1V135.0 h1V136.5 h1V135.0 h1V135.0 h1V135.0 h1V135.0 h1V135.0 h1V135.0 h1V135.0 h1V135.0 h1V135.0 h1V135.0 h1V135.0 h1V135.0 h1V135.0 h1V135.0 h1V135.0 h1V135.0 h1V135.0 h1V135.0 h1V135.0 h1V135.0 h1V135.0 h1V135.0 h1V135.0 h1V135.0 h1V135.0 h1V135.0 h1V135.0 h1V135.0 h1V135.0 h1V135.0 h1V135.0 h1V135.0 h1V135.0 h1V135.0 h1V135.0 h1V135.0 h1V135.0 h1V135.0 h1V135.0 h1V135.0 h1V135.0 h1V135.5 h1V136.0 h1V135.5 h1V135.0 h1V136.0 h1V136.5 h1V136.0 h1V136.5 h1V136.5 h1V137.5 h1V137.5 h1V138.0 h1V138.0 h1V138.0 h1V138.0 h1V139.0 h1V138.5 h1V139.5 h1V139.0 h1V139.5 h1V139.5 h1V140.0 h1V140.5 h1V140.0 h1V140.5 h1V140.5 h1V141.0 h1V141.0 h1V141.0 h1V141.0 h1V141.0 h1V141.5 h1V141.5 h1V141.5 h1V141.5 h1V141.5 h1V141.5 h1V141.5 h1V141.5 h1V141.5 h1V141.5 h1V141.5 h1V141.5 h1V141.5 h1V141.5 h1V141.5 h1V141.5 h1V141.5 h1V141.5 h1V141.5 h1V141.5 h1V141.5 h1V141.5 h1V141.5 h1V141.5 h1V141.5 h1V141.5 h1V141.5 h1V141.5 h1V141.5 h1V141.5 h1V142.0V142.5 h-1V142.5 h-1V142.5 h-1V142.5 h-1V142.5 h-1V142.5 h-1V142.5 h-1V142.5 h-1V142.5 h-1V142.5 h-1V142.5 h-1V142.5 h-1V142.5 h-1V142.5 h-1V142.5 h-1V142.5 h-1V142.5 h-1V142.5 h-1V142.5 h-1V142.5 h-1V142.5 h-1V142.5 h-1V142.5 h-1V142.5 h-1V142.5 h-1V142.5 h-1V142.5 h-1V142.5 h-1V142.5 h-1V142.5 h-1V142.5 h-1V143.0 h-1V142.5 h-1V143.0 h-1V143.0 h-1V143.0 h-1V143.0 h-1V143.5 h-1V143.5 h-1V143.5 h-1V144.5 h-1V144.5 h-1V145.0 h-1V144.5 h-1V145.5 h-1V145.0 h-1V145.5 h-1V145.5 h-1V146.0 h-1V146.0 h-1V146.0 h-1V146.0 h-1V147.5 h-1V147.0 h-1V147.5 h-1V147.0 h-1V147.5 h-1V148.5 h-1V148.0 h-1V147.5 h-1V148.0 h-1V148.5 h-1V148.5 h-1V148.5 h-1V148.5 h-1V148.5 h-1V148.5 h-1V148.5 h-1V148.5 h-1V148.5 h-1V148.5 h-1V148.5 h-1V148.5 h-1V148.5 h-1V148.5 h-1V148.5 h-1V148.5 h-1V148.5 h-1V148.5 h-1V148.5 h-1V148.5 h-1V148.5 h-1V148.5 h-1V148.5 h-1V148.5 h-1V148.5 h-1V147.0 h-1V148.5 h-1V148.5 h-1V147.0 h-1V148.5 h-1V148.5 h-1V148.5 h-1V148.5 h-1V148.5 h-1V148.5 h-1V148.5 h-1V148.5 h-1V148.5 h-1V148.5 h-1V148.5 h-1V148.5 h-1V148.5 h-1V148.5 h-1V148.5 h-1V148.5 h-1V148.5 h-1V148.5 h-1V148.5 h-1V147.0 h-1V148.5 h-1V148.5 h-1V147.0 h-1V148.5 h-1V148.5 h-1V148.5 h-1V148.5 h-1V148.5 h-1V148.5 h-1V148.5 h-1V148.5 h-1V148.5 h-1V148.5 h-1V148.5 h-1V148.5 h-1V148.5 h-1V148.5 h-1V148.5 h-1V148.5 h-1V147.0 h-1V147.0 h-1V148.5 h-1V148.5 h-1V148.5 h-1V148.5 h-1V148.5 h-1V148.5 h-1V148.5 h-1V148.5 h-1V148.5 h-1V148.5 h-1V148.5 h-1V148.5 h-1V148.5 h-1V148.5 h-1V148.5 h-1V148.5 h-1V148.5 h-1V148.5 h-1V148.5 h-1V148.5 h-1V148.5 h-1V148.5 h-1V148.5 h-1V148.5 h-1V148.5 h-1V148.5 h-1V147.0 h-1V148.5 h-1V148.5 h-1V148.5 h-1V148.5 h-1V148.5 h-1V148.5 h-1V148.5 h-1V148.5 h-1V148.5 h-1V147.0 h-1V148.5 h-1V148.5 h-1V148.5 h-1V148.5 h-1V148.5 h-1V148.5 h-1V148.5 h-1V148.5 h-1V148.5 h-1V148.5 h-1V148.5 h-1V147.0 h-1V148.5 h-1V148.5 h-1V148.5 h-1V148.5 h-1V148.5 h-1V148.5 h-1V148.5 h-1V148.5 h-1V148.5 h-1V148.5 h-1V148.5 h-1V148.5 h-1V148.5 h-1V148.5 h-1V148.5 h-1V148.5 h-1V147.0 h-1V148.5 h-1V147.0 h-1V148.5 h-1V147.0 h-1V148.5 h-1V148.5 h-1V148.5 h-1V148.5 h-1V148.5 h-1V147.0 h-1V148.5 h-1V147.0 h-1V148.5 h-1V148.5 h-1V148.5 h-1V148.5 h-1V148.5 h-1V147.0 h-1V148.5 h-1V148.5 h-1V148.5 h-1V148.5 h-1V147.0 h-1V148.5 h-1V148.5 h-1V148.5 h-1V148.5 h-1V148.5 h-1V148.5 h-1V147.0 h-1V148.5 h-1V148.5 h-1V147.0 h-1V148.5 h-1V148.5 h-1V148.5 h-1V148.5 h-1V148.5 h-1V147.0 h-1V148.5 h-1V148.5 h-1V148.5 h-1V148.5 h-1V148.5 h-1V147.0 h-1V148.5 h-1V148.5 h-1V148.5 h-1V148.5 h-1V148.5 h-1V148.5 h-1V147.0 h-1V148.5 h-1V148.5 h-1V148.5 h-1V148.5 h-1V148.5 h-1V148.5 h-1V148.5 h-1V148.5 h-1V148.5 h-1V148.5 h-1V148.5 h-1V148.5 h-1V148.5 h-1V148.5 h-1V148.5 h-1V148.5 h-1V147.0 h-1V148.5 h-1V147.0 h-1V148.5 h-1V148.5 h-1V148.5 h-1V148.5 h-1V148.5 h-1V148.5 h-1V148.5 h-1V148.5 h-1V148.5 h-1V148.5 h-1V148.5 h-1V148.5 h-1V148.5 h-1V147.0 h-1V148.5 h-1V148.5 h-1V148.5 h-1V147.0 h-1V148.5 h-1V148.5 h-1V148.5 h-1V148.5 h-1V148.5 h-1V148.5 h-1V148.5 h-1V148.5 h-1V147.0 h-1V148.5 h-1V148.5 h-1V148.5 h-1V148.5 h-1V148.5 h-1V148.5 h-1V148.5 h-1V148.5 h-1V148.5 h-1V148.5 h-1V148.5 h-1V148.5 h-1V148.5 h-1V148.5 h-1V148.5 h-1V148.5 h-1V147.0 h-1V148.5 h-1V148.5 h-1V148.5 h-1V148.5 h-1V147.0 h-1V147.0 h-1V148.5 h-1V148.5 h-1V148.5 h-1V148.5 h-1V148.5 h-1V148.5 h-1V148.5 h-1V148.5 h-1V148.5 h-1V148.5 h-1V148.5 h-1V148.5 h-1V148.5 h-1V148.5 h-1V148.5 h-1V148.5 h-1V148.5 h-1V148.5 h-1V148.5 h-1V148.5 h-1V148.5 h-1V148.5 h-1V148.5 h-1V148.5 h-1V148.5 h-1V148.5 h-1V148.5 h-1V148.5 h-1V147.0 h-1V148.5 h-1V148.5 h-1V148.5 h-1V148.0 h-1V148.0 h-1V148.0 h-1V147.5 h-1V147.5 h-1V147.0 h-1V147.0 h-1V147.0 h-1V146.5 h-1V146.5 h-1V146.5 h-1V146.0 h-1V146.0 h-1V145.5 h-1V144.5 h-1V143.0 h-1V144.0 h-1V145.0 h-1V145.0 h-1V146.0 h-1V146.5 h-1V146.0 h-1V147.0 h-1V146.5 h-1V146.0 h-1V146.5 h-1V146.0 h-1V146.0 h-1V147.0 h-1V146.5 h-1V146.0 h-1V145.5 h-1V146.0 h-1V146.5 h-1V146.0 h-1V146.0 h-1V146.5 h-1V146.0 h-1V146.0 h-1V146.0 h-1V147.0 h-1V146.0 h-1V146.0 h-1V147.0 h-1V146.5 h-1V146.5 h-1V146.5 h-1V146.5 h-1V146.5 h-1V147.0 h-1V147.5 h-1V148.0 h-1V148.5 h-1V148.5 h-1V148.5 h-1V148.5 h-1V148.5 h-1V148.5 h-1V148.5 h-1V148.5 h-1V148.5 h-1V148.5 h-1V148.5 h-1V148.5 h-1V148.5 h-1V148.5 h-1V148.5 h-1V148.5 h-1V148.5 h-1V148.5 h-1V148.5 h-1V148.5 h-1V148.5 h-1V147.0 h-1V148.5 h-1V148.5 h-1V148.5 h-1V148.5 h-1V148.5 h-1V147.0 h-1V148.5 h-1V148.5 h-1V148.5 h-1V148.5 h-1V148.5 h-1V148.5 h-1V148.5 h-1V148.5 h-1V148.5 h-1V148.5 h-1V147.0 h-1V148.5 h-1V148.5 h-1V148.5 h-1V148.5 h-1V148.5 h-1V148.5 h-1V148.5 h-1V148.5 h-1V148.5 h-1V148.5 h-1V148.5 h-1V147.0 h-1V148.5 h-1V148.5 h-1V148.5 h-1V148.5 h-1V148.5 h-1V148.5 h-1V148.5 h-1V148.5 h-1V148.5 h-1V147.0 h-1V147.0 h-1V148.5 h-1V148.5 h-1V148.5 h-1V148.5 h-1V148.5 h-1V147.0 h-1V148.5 h-1V148.5 h-1V148.5 h-1V148.5 h-1V147.0 h-1V148.5 h-1V148.5 h-1V148.5 h-1V148.5 h-1V148.5 h-1V148.5 h-1V148.5 h-1V148.5 h-1V148.5 h-1V148.5 h-1V148.5 h-1V148.5 h-1V148.5 h-1V148.5 h-1V148.5 h-1V148.5 h-1V148.5 h-1V148.5 h-1V148.5 h-1V148.5 h-1V148.5 h-1V148.5 h-1V148.5 h-1V147.0 h-1V148.5 h-1V148.5 h-1V148.5 h-1V148.5 h-1V148.5 h-1V148.5 h-1V147.0 h-1V148.5 h-1V148.5 h-1V148.5 h-1V148.5 h-1V148.5 h-1V148.5 h-1V148.5 h-1V148.5 h-1V148.5 h-1V148.5 h-1V148.5 h-1V148.5 h-1V148.5 h-1V148.5 h-1V148.5 h-1V148.5 h-1V148.5 h-1V148.5 h-1V147.0 h-1V148.5 h-1V148.5 h-1V148.5 h-1V148.5 h-1V148.5 h-1V148.5 h-1V148.5 h-1V148.5 h-1V147.0 h-1V148.5 h-1V148.5 h-1V148.5 h-1V148.5 h-1V148.5 h-1V148.5 h-1V148.5 h-1V148.5 h-1V148.5 h-1V148.5 h-1V148.5 h-1V148.5 h-1V148.5 h-1V148.5 h-1V148.5 h-1V148.5 h-1V148.5 h-1V148.5 h-1V148.5 h-1V148.5 h-1V148.5 h-1V147.0 h-1V148.5 h-1V148.5 h-1V148.5 h-1V148.5 h-1V148.5 h-1V147.0 h-1V148.5 h-1V148.5 h-1V148.5 h-1V148.5 h-1V147.0 h-1V148.5 h-1V148.5 h-1V148.5 h-1V148.5 h-1V148.5 h-1V148.5 h-1V148.5 h-1V148.5 h-1V148.5 h-1V148.5 h-1V148.5 h-1V148.5 h-1V148.5 h-1V148.5 h-1V148.5 h-1V148.5 h-1V148.5 h-1V148.5 h-1V148.5 h-1V148.5 h-1V148.5 h-1V148.5 h-1V148.5 h-1V148.5 h-1V148.5 h-1V148.5 h-1V148.5 h-1V148.5 h-1V148.5 h-1V148.5 h-1V148.5 h-1V148.5 h-1V148.5 h-1V148.5 h-1V148.5 h-1V148.5 h-1V148.5 h-1V148.5 h-1V148.5 h-1V148.5 h-1V148.5 h-1V148.5 h-1V147.0 h-1V148.5 h-1V148.5 h-1V148.5 h-1V148.5 h-1V148.5 h-1V148.5 h-1V148.5 h-1V148.5 h-1V148.5 h-1V148.5 h-1V148.5 h-1V148.5 h-1V148.5 h-1V148.5 h-1V148.5 h-1V148.5 h-1V148.5 h-1V148.5 h-1V148.5 h-1V148.5 h-1V148.5 h-1V148.5 h-1V148.5 h-1V148.5 h-1V148.5 h-1V148.5 h-1V148.5 h-1V148.5 h-1V148.5 h-1V148.5 h-1V148.5 h-1V148.5 h-1V148.5 h-1V148.5 h-1V148.5 h-1V148.5 h-1V148.5 h-1V147.0 h-1V148.5 h-1V148.5 h-1V148.5 h-1V147.0 h-1V148.5 h-1V148.5 h-1V148.5 h-1V148.5 h-1V148.5 h-1V148.5 h-1V148.5 h-1V148.5 h-1V148.5 h-1V148.5 h-1V148.5 h-1V148.5 h-1V148.5 h-1V147.0 h-1V148.5 h-1V148.5 h-1V148.5 h-1V147.0 h-1V148.5 h-1V147.0 h-1V148.5 h-1V148.5 h-1V148.5 h-1V148.5 h-1V148.5 h-1V148.5 h-1V148.5 h-1V148.5 h-1V148.5 h-1V147.0 h-1V148.5 h-1V148.5 h-1V148.5 h-1V148.5 h-1V147.0 h-1V148.5 h-1V148.5 h-1V148.5 h-1V148.5 h-1V148.5 h-1V148.5 h-1V147.0 h-1V148.5 h-1V148.5 h-1V147.0 h-1V148.5 h-1V147.0 h-1V148.5 h-1V148.5 h-1V148.5 h-1V148.5 h-1V148.5 h-1V148.5 h-1V148.5 h-1V147.0 h-1V148.5 h-1V148.5 h-1V148.5 h-1V148.5 h-1V148.5 h-1V148.5 h-1V148.5 h-1V148.5 h-1V148.5 h-1V147.0 h-1V148.5 h-1V148.5 h-1V148.5 h-1V148.5 h-1V148.5 h-1V148.5 h-1V148.5 h-1V148.5 h-1V148.5 h-1V147.0 h-1V148.5 h-1V148.5 h-1V148.5 h-1V148.5 h-1V148.5 h-1V148.5 h-1V148.5 h-1V148.5 h-1V148.5 h-1V148.5 h-1V148.5 h-1V148.5 h-1V148.5 h-1V148.5 h-1V148.5 h-1V148.5 h-1V148.5 h-1V148.5 h-1V148.5 h-1V148.5 h-1V148.5 h-1V148.5 h-1V148.5 h-1V148.5 h-1V148.5 h-1V148.5 h-1V148.5 h-1V148.5 h-1V148.5 h-1V147.0 h-1V147.0 h-1V148.5 h-1V148.5 h-1V148.5 h-1V148.5 h-1V148.5 h-1V148.5 h-1V148.5 h-1V148.5 h-1V148.5 h-1V148.5 h-1V148.5 h-1V148.5 h-1V148.5 h-1V148.5 h-1V148.5 h-1V148.5 h-1V148.5 h-1V148.5 h-1V147.0 h-1V148.5 h-1V148.5 h-1V148.5 h-1V148.5 h-1V148.5 h-1V148.5 h-1V148.5 h-1V147.0 h-1V148.5 h-1V148.5 h-1V148.5 h-1V147.0 h-1V148.5 h-1V148.5 h-1V148.5 h-1V148.5 h-1V148.5 h-1V148.5 h-1V147.0 h-1V148.5 h-1V148.5 h-1V148.5 h-1V148.5 h-1V148.5 h-1V148.5 h-1V148.5 h-1V148.5 h-1V148.5 h-1V148.5 h-1V148.5 h-1V148.5 h-1V148.5 h-1V148.5 h-1V148.5 h-1V148.5 h-1V148.5 h-1V148.5 h-1V148.5 h-1V148.5 h-1V148.5 h-1V148.5 h-1V148.5 h-1V148.5 h-1V148.5 h-1V148.5 h-1V148.5 h-1V147.0 h-1V148.5 h-1V148.5 h-1V148.5 h-1V148.5 h-1V148.5 h-1V148.5 h-1V148.5 h-1V148.5 h-1V148.5 h-1V148.5 h-1V148.5 h-1V148.5 h-1V148.5 h-1V148.5 h-1V148.5 h-1V148.5 h-1V148.5 h-1V148.5 h-1V148.5 h-1V148.5 h-1V148.5 h-1V148.5 h-1V147.0 h-1V148.5 h-1V148.5 h-1V148.5 h-1V147.0 h-1V147.0 h-1V148.5 h-1V147.0 h-1V148.5 h-1V148.5 h-1V148.5 h-1V148.5 h-1V148.5 h-1V148.5 h-1V148.5 h-1V148.5 h-1V147.0 h-1V148.5 h-1V148.5 h-1V148.5 h-1V148.5 h-1V148.5 h-1V148.5 h-1V147.0 h-1V148.5 h-1V148.5 h-1V148.5 h-1V148.5 h-1V148.5 h-1V148.5 h-1V148.5 h-1V148.5 h-1V148.5 h-1V148.5 h-1V148.5 h-1V148.5 h-1V148.5 h-1V148.5 h-1V148.5 h-1V148.5 h-1V148.0 h-1V147.5 h-1V147.5 h-1V147.5 h-1V148.0 h-1V147.5 h-1V147.5 h-1V148.0 h-1V147.0 h-1V146.5 h-1V147.5 h-1V148.0 h-1V147.0 h-1V146.5 h-1V147.5 h-1V147.0 h-1V146.5 h-1V146.0 h-1V145.5 h-1V145.5 h-1V145.5 h-1V146.0 h-1V145.0 h-1V145.0 h-1V146.5 h-1V145.5 h-1V146.0 h-1V145.5 h-1V145.0 h-1V146.5 h-1V145.5 h-1V145.5 h-1V145.5 h-1V145.5 h-1V146.5 h-1V146.0 h-1V146.0 h-1V146.5 h-1V147.0 h-1V147.5 h-1V147.0 h-1V147.5 h-1V147.0 h-1V146.5 h-1V147.0 h-1V146.0 h-1V146.0 h-1V145.0 h-1V145.0 h-1V146.0 h-1V145.5 h-1V146.0 h-1V144.5 h-1V146.0 h-1V146.0 h-1V146.5 h-1V145.5 h-1V146.0 h-1V147.0 h-1V147.5 h-1V147.5 h-1V148.0 h-1V147.5 h-1V147.5 h-1V147.0 h-1V147.5 h-1V148.0 h-1V147.5 h-1V147.0 h-1V147.0 h-1V147.5 h-1V148.0 h-1V148.0 h-1V147.5 h-1V147.5 h-1V148.0 h-1V147.5 h-1V147.0 h-1V146.5 h-1V145.5 h-1V146.5 h-1V146.0 h-1V145.0 h-1V145.5 h-1V147.0 h-1V147.0 h-1V146.5 h-1V147.0 h-1V147.0 h-1V147.0 h-1V146.0 h-1V147.0 h-1V147.0 h-1V147.0 h-1V147.0 h-1V147.0 h-1V147.0 h-1V146.5 h-1V147.0 h-1V146.0 h-1V146.0 h-1V146.0 h-1V146.5 h-1V145.5 h-1V146.0 h-1V146.0 h-1V145.5 h-1V145.5 h-1V146.0 h-1V148.0 h-1V147.0 h-1V148.0 h-1V147.0 h-1V147.0 h-1V147.0 h-1V147.0 h-1V146.0 h-1V146.5 h-1V145.5 h-1V145.5 h-1V146.0 h-1V145.5 h-1V146.5 h-1V146.5 h-1V145.0 h-1V145.5 h-1V144.5 h-1V145.5 h-1V146.0 h-1V145.5 h-1V146.0 h-1V145.5 h-1V146.5 h-1V146.0 h-1V143.5 h-1V143.5 h-1V143.5 h-1Z" fill="#5ed3aa"/>
<path d="M421 158.5V156.5 h1V156.5 h1V156.5 h1V152.5 h1V152.0 h1V152.5 h1V153.5 h1V153.5 h1V154.5 h1V153.0 h1V153.0 h1V154.5 h1V154.0 h1V153.0 h1V153.5 h1V155.0 h1V154.0 h1V153.0 h1V153.0 h1V152.5 h1V153.5 h1V153.0 h1V152.5 h1V151.5 h1V152.5 h1V152.0 h1V151.5 h1V153.5 h1V152.5 h1V154.0 h1V154.0 h1V153.0 h1V152.5 h1V152.5 h1V153.0 h1V151.5 h1V152.5 h1V152.5 h1V154.0 h1V155.0 h1V153.5 h1V154.0 h1V155.0 h1V153.5 h1V154.0 h1V153.5 h1V153.0 h1V152.5 h1V153.5 h1V154.5 h1V155.0 h1V153.5 h1V155.0 h1V153.5 h1V153.5 h1V154.0 h1V154.0 h1V153.0 h1V152.5 h1V152.5 h1V152.5 h1V152.0 h1V153.5 h1V153.5 h1V151.5 h1V152.0 h1V153.0 h1V152.0 h1V152.0 h1V152.5 h1V154.0 h1V153.0 h1V153.5 h1V153.0 h1V153.0 h1V151.5 h1V153.0 h1V152.0 h1V154.0 h1V153.5 h1V153.0 h1V153.5 h1V155.0 h1V154.5 h1V154.5 h1V154.0 h1V154.5 h1V154.0 h1V153.0 h1V153.0 h1V153.5 h1V154.0 h1V152.5 h1V153.5 h1V153.0 h1V153.0 h1V152.5 h1V152.0 h1V153.0 h1V152.0 h1V153.0 h1V153.0 h1V153.5 h1V155.0 h1V155.0 h1V154.5 h1V155.5 h1V155.0 h1V153.5 h1V153.5 h1V153.0 h1V154.5 h1V153.5 h1V155.0 h1V154.0 h1V155.0 h1V154.5 h1V154.0 h1V154.0 h1V152.5 h1V154.0 h1V153.5 h1V152.5 h1V152.5 h1V152.5 h1V152.0 h1V152.0 h1V153.5 h1V154.0 h1V154.5 h1V154.0 h1V154.0 h1V155.0 h1V154.5 h1V153.5 h1V154.5 h1V155.0 h1V152.5 h1V151.0 h1V151.0 h1V151.0 h1V151.0 h1V151.0 h1V151.0 h1V152.5 h1V151.0 h1V151.0 h1V151.0 h1V151.0 h1V151.0 h1V151.0 h1V151.0 h1V151.0 h1V151.0 h1V151.0 h1V151.0 h1V151.0 h1V151.0 h1V151.0 h1V151.0 h1V151.0 h1V151.0 h1V151.0 h1V151.0 h1V151.0 h1V151.0 h1V151.0 h1V151.0 h1V151.0 h1V151.0 h1V151.0 h1V151.0 h1V151.0 h1V152.5 h1V151.0 h1V151.0 h1V151.0 h1V151.0 h1V151.0 h1V151.0 h1V152.5 h1V151.0 h1V151.0 h1V151.0 h1V151.0 h1V151.0 h1V151.0 h1V151.0 h1V151.0 h1V151.0 h1V151.0 h1V151.0 h1V151.0 h1V151.0 h1V151.0 h1V151.0 h1V151.0 h1V151.0 h1V151.0 h1V151.0 h1V151.0 h1V151.0 h1V151.0 h1V151.0 h1V152.5 h1V151.0 h1V151.0 h1V151.0 h1V151.0 h1V151.0 h1V151.0 h1V151.0 h1V151.0 h1V151.0 h1V152.5 h1V151.0 h1V151.0 h1V151.0 h1V151.0 h1V151.0 h1V151.0 h1V151.0 h1V151.0 h1V151.0 h1V151.0 h1V151.0 h1V151.0 h1V151.0 h1V151.0 h1V151.0 h1V151.0 h1V151.0 h1V151.0 h1V151.0 h1V151.0 h1V151.0 h1V151.0 h1V151.0 h1V151.0 h1V151.0 h1V151.0 h1V151.0 h1V151.0 h1V151.0 h1V151.0 h1V151.0 h1V152.5 h1V151.0 h1V151.0 h1V151.0 h1V151.0 h1V151.0 h1V152.5 h1V151.0 h1V151.0 h1V151.0 h1V151.0 h1V151.0 h1V151.0 h1V151.0 h1V151.0 h1V151.0 h1V151.0 h1V152.5 h1V151.0 h1V151.0 h1V151.0 h1V152.5 h1V151.0 h1V151.0 h1V151.0 h1V151.0 h1V151.0 h1V151.0 h1V151.0 h1V151.0 h1V151.0 h1V151.0 h1V151.0 h1V151.0 h1V151.0 h1V151.0 h1V151.0 h1V151.0 h1V151.0 h1V151.0 h1V151.0 h1V151.0 h1V151.0 h1V151.0 h1V151.0 h1V151.0 h1V151.0 h1V152.5 h1V151.0 h1V151.0 h1V151.0 h1V151.0 h1V151.0 h1V151.0 h1V151.0 h1V151.0 h1V151.0 h1V151.0 h1V151.0 h1V151.0 h1V151.0 h1V151.0 h1V151.0 h1V151.0 h1V151.0 h1V151.0 h1V151.0 h1V151.0 h1V151.0 h1V151.0 h1V151.0 h1V151.0 h1V151.0 h1V151.0 h1V151.0 h1V151.0 h1V151.0 h1V151.0 h1V151.0 h1V151.0 h1V151.0 h1V151.0 h1V151.0 h1V151.0 h1V151.0 h1V151.0 h1V152.5 h1V151.0 h1V151.0 h1V151.0 h1V151.0 h1V151.0 h1V151.0 h1V151.0 h1V151.0 h1V151.0 h1V151.0 h1V151.0 h1V151.0 h1V151.0 h1V151.0 h1V151.0 h1V151.0 h1V151.0 h1V151.0 h1V151.0 h1V151.0 h1V151.0 h1V151.0 h1V151.0 h1V151.0 h1V151.0 h1V151.0 h1V152.5 h1V151.0 h1V152.5 h1V151.0 h1V151.0 h1V151.0 h1V151.0 h1V151.0 h1V151.0 h1V151.0 h1V151.0 h1V151.0 h1V151.0 h1V151.0 h1V151.0 h1V151.0 h1V151.0 h1V151.0 h1V151.0 h1V151.0 h1V151.0 h1V151.0 h1V151.0 h1V151.0 h1V151.0 h1V151.0 h1V151.0 h1V151.0 h1V151.0 h1V151.0 h1V151.0 h1V151.0 h1V151.0 h1V151.0 h1V151.0 h1V151.0 h1V151.0 h1V151.0 h1V151.0 h1V151.0 h1V151.0 h1V151.0 h1V151.0 h1V151.0 h1V151.0 h1V151.0 h1V151.0 h1V151.0 h1V151.0 h1V151.0 h1V151.0 h1V151.0 h1V151.0 h1V151.0 h1V151.0 h1V152.5 h1V151.0 h1V151.0 h1V151.0 h1V151.0 h1V151.0 h1V151.0 h1V152.5 h1V151.0 h1V151.0 h1V151.0 h1V151.0 h1V151.0 h1V151.0 h1V151.0 h1V151.0 h1V151.0 h1V151.0 h1V151.0 h1V151.0 h1V151.0 h1V151.0 h1V151.0 h1V151.0 h1V151.0 h1V151.0 h1V151.0 h1V151.0 h1V151.0 h1V151.0 h1V151.0 h1V151.0 h1V151.0 h1V151.0 h1V151.0 h1V151.0 h1V151.0 h1V151.0 h1V151.0 h1V151.0 h1V151.0 h1V151.0 h1V151.0 h1V151.0 h1V151.0 h1V151.0 h1V151.0 h1V151.0 h1V151.0 h1V151.0 h1V151.0 h1V151.0 h1V151.0 h1V151.0 h1V151.0 h1V151.0 h1V151.0 h1V151.0 h1V151.0 h1V151.0 h1V151.0 h1V151.0 h1V151.0 h1V151.0 h1V151.0 h1V151.0 h1V151.0 h1V151.0 h1V151.0 h1V151.0 h1V151.0 h1V151.0 h1V151.0 h1V151.0 h1V151.0 h1V151.0 h1V151.0 h1V151.0 h1V151.0 h1V151.0 h1V151.0 h1V151.0 h1V151.0 h1V151.0 h1V151.0 h1V151.0 h1V151.0 h1V151.0 h1V151.0 h1V151.0 h1V151.0 h1V151.0 h1V151.0 h1V151.0 h1V151.0 h1V151.0 h1V151.0 h1V151.0 h1V151.0 h1V151.0 h1V151.0 h1V151.0 h1V151.0 h1V151.0 h1V151.0 h1V151.0 h1V151.0 h1V151.0 h1V151.0 h1V151.0 h1V151.0 h1V151.0 h1V151.0 h1V151.0 h1V151.0 h1V151.0 h1V152.5 h1V151.0 h1V151.0 h1V151.0 h1V151.0 h1V151.0 h1V151.0 h1V151.0 h1V151.0 h1V151.0 h1V151.0 h1V151.0 h1V151.0 h1V151.0 h1V151.0 h1V151.0 h1V151.0 h1V151.0 h1V151.0 h1V151.0 h1V151.0 h1V151.0 h1V151.0 h1V151.0 h1V152.5 h1V151.0 h1V151.0 h1V152.5 h1V151.0 h1V151.0 h1V151.0 h1V151.0 h1V151.0 h1V151.0 h1V151.0 h1V151.0 h1V151.0 h1V151.0 h1V151.0 h1V151.0 h1V151.0 h1V151.0 h1V151.0 h1V151.0 h1V151.0 h1V151.0 h1V151.0 h1V151.0 h1V151.0 h1V151.0 h1V151.0 h1V151.0 h1V151.0 h1V151.0 h1V151.0 h1V151.0 h1V151.0 h1V152.5 h1V151.0 h1V151.0 h1V151.0 h1V151.0 h1V151.0 h1V151.0 h1V151.0 h1V151.0 h1V151.0 h1V151.0 h1V151.0 h1V151.0 h1V151.0 h1V151.0 h1V151.0 h1V151.0 h1V151.0 h1V152.5 h1V151.0 h1V151.0 h1V151.0 h1V151.0 h1V151.0 h1V151.0 h1V151.0 h1V151.0 h1V151.0 h1V151.0 h1V151.0 h1V151.0 h1V151.0 h1V151.0 h1V151.0 h1V151.5 h1V152.0 h1V152.5 h1V152.5 h1V153.5 h1V153.5 h1V154.0 h1V154.0 h1V153.5 h1V153.5 h1V154.0 h1V153.0 h1V154.0 h1V153.5 h1V153.0 h1V154.0 h1V153.0 h1V154.0 h1V154.0 h1V153.5 h1V153.5 h1V153.5 h1V153.5 h1V154.0 h1V154.0 h1V153.5 h1V153.5 h1V153.0 h1V153.0 h1V154.0 h1V154.0 h1V154.0 h1V154.5 h1V155.0 h1V155.5 h1V155.0 h1V155.5 h1V155.0 h1V154.0 h1V153.5 h1V153.5 h1V153.0 h1V153.0 h1V153.0 h1V153.0 h1V153.0 h1V152.5 h1V152.0 h1V152.0 h1V151.5 h1V151.5 h1V151.5 h1V151.0 h1V151.0 h1V151.0 h1V151.0 h1V151.0 h1V151.0 h1V151.0 h1V151.0 h1V151.0 h1V151.0 h1V151.0 h1V151.0 h1V152.5 h1V151.0 h1V151.0 h1V151.0 h1V151.0 h1V151.0 h1V151.0 h1V151.0 h1V151.0 h1V152.5 h1V151.0 h1V151.0 h1V151.0 h1V151.0 h1V151.0 h1V151.0 h1V151.0 h1V151.0 h1V151.0 h1V151.0 h1V151.0 h1V151.0 h1V151.0 h1V151.0 h1V151.0 h1V151.0 h1V151.0 h1V151.0 h1V151.0 h1V151.0 h1V151.0 h1V152.5 h1V151.0 h1V151.0 h1V151.0 h1V151.0 h1V151.0 h1V151.0 h1V151.0 h1V151.0 h1V151.0 h1V151.0 h1V151.0 h1V151.0 h1V151.0 h1V151.0 h1V151.0 h1V151.0 h1V151.0 h1V151.0 h1V151.0 h1V151.0 h1V152.5 h1V151.0 h1V151.0 h1V151.0 h1V151.0 h1V151.0 h1V151.0 h1V151.0 h1V151.0 h1V151.0 h1V151.0 h1V151.0 h1V151.0 h1V151.0 h1V151.0 h1V151.0 h1V151.0 h1V151.0 h1V151.0 h1V151.0 h1V151.0 h1V151.0 h1V151.0 h1V151.0 h1V151.0 h1V151.0 h1V151.0 h1V151.0 h1V151.0 h1V151.0 h1V151.0 h1V151.0 h1V151.0 h1V151.0 h1V151.0 h1V151.0 h1V151.0 h1V151.0 h1V151.0 h1V151.0 h1V151.0 h1V151.0 h1V151.0 h1V151.0 h1V151.0 h1V151.0 h1V151.0 h1V151.0 h1V151.0 h1V151.0 h1V151.0 h1V151.0 h1V151.0 h1V151.0 h1V151.0 h1V151.0 h1V151.0 h1V151.0 h1V151.0 h1V151.0 h1V151.0 h1V151.0 h1V151.0 h1V151.0 h1V151.0 h1V151.0 h1V151.0 h1V151.0 h1V151.0 h1V152.5 h1V152.5 h1V151.0 h1V151.0 h1V151.0 h1V151.0 h1V151.0 h1V151.0 h1V151.0 h1V151.0 h1V151.0 h1V151.0 h1V151.0 h1V151.0 h1V151.0 h1V151.0 h1V151.0 h1V151.0 h1V151.0 h1V151.0 h1V151.0 h1V151.0 h1V151.0 h1V151.0 h1V151.0 h1V151.0 h1V151.0 h1V151.0 h1V151.0 h1V151.0 h1V151.0 h1V151.0 h1V151.0 h1V151.0 h1V151.0 h1V151.0 h1V151.0 h1V151.0 h1V151.0 h1V151.0 h1V151.0 h1V151.0 h1V151.0 h1V151.0 h1V151.0 h1V151.0 h1V151.0 h1V151.0 h1V151.0 h1V151.0 h1V151.0 h1V151.0 h1V151.0 h1V151.0 h1V151.0 h1V151.0 h1V151.0 h1V151.0 h1V151.0 h1V151.0 h1V151.0 h1V151.0 h1V152.5 h1V151.0 h1V152.5 h1V151.0 h1V151.0 h1V151.0 h1V151.0 h1V151.0 h1V151.0 h1V151.0 h1V152.5 h1V151.0 h1V151.0 h1V151.0 h1V151.0 h1V151.0 h1V151.0 h1V151.0 h1V151.0 h1V151.0 h1V151.0 h1V151.0 h1V151.0 h1V151.0 h1V151.0 h1V151.0 h1V151.0 h1V151.0 h1V151.0 h1V151.0 h1V151.0 h1V151.0 h1V151.0 h1V151.0 h1V151.0 h1V151.0 h1V151.0 h1V151.0 h1V151.0 h1V151.0 h1V151.0 h1V151.0 h1V151.0 h1V151.0 h1V151.0 h1V151.0 h1V151.0 h1V151.0 h1V151.0 h1V151.0 h1V151.0 h1V151.0 h1V151.0 h1V151.0 h1V151.0 h1V151.0 h1V151.0 h1V151.0 h1V151.0 h1V151.0 h1V151.0 h1V151.0 h1V151.0 h1V152.5 h1V151.0 h1V151.0 h1V151.0 h1V151.0 h1V151.0 h1V151.0 h1V151.0 h1V152.5 h1V151.0 h1V151.0 h1V151.0 h1V151.0 h1V151.0 h1V151.0 h1V151.0 h1V151.0 h1V151.0 h1V151.0 h1V151.0 h1V151.0 h1V151.0 h1V151.0 h1V151.0 h1V151.0 h1V151.0 h1V151.0 h1V151.0 h1V151.5 h1V151.5 h1V151.0 h1V151.0 h1V152.5 h1V151.0 h1V151.5 h1V152.5 h1V151.5 h1V152.5 h1V152.5 h1V153.0 h1V153.0 h1V154.0 h1V154.5 h1V153.5 h1V154.0 h1V154.5 h1V155.0 h1V154.5 h1V155.0 h1V155.5 h1V155.5 h1V156.5 h1V156.5 h1V156.5 h1V156.5 h1V157.0 h1V157.0 h1V157.0 h1V157.5 h1V157.5 h1V157.5 h1V158.0 h1V158.0 h1V158.0 h1V158.0 h1V158.0 h1V158.0 h1V158.0 h1V158.0 h1V158.0 h1V158.0 h1V158.0 h1V158.0 h1V158.0 h1V158.0 h1V158.0 h1V158.0 h1V158.0 h1V158.0 h1V158.0 h1V158.0 h1V158.0 h1V158.0 h1V158.0 h1V158.0 h1V158.0 h1V158.0 h1V158.0 h1V158.0 h1V158.0 h1V158.0 h1V158.0 h1V158.5V159.0 h-1V159.0 h-1V159.0 h-1V159.0 h-1V159.0 h-1V159.0 h-1V159.0 h-1V159.0 h-1V159.0 h-1V159.0 h-1V159.0 h-1V159.0 h-1V159.0 h-1V159.0 h-1V159.0 h-1V159.0 h-1V159.0 h-1V159.0 h-1V159.0 h-1V159.0 h-1V159.0 h-1V159.0 h-1V159.0 h-1V159.0 h-1V159.0 h-1V159.0 h-1V159.0 h-1V159.0 h-1V159.0 h-1V159.0 h-1V159.0 h-1V159.5 h-1V159.5 h-1V159.5 h-1V160.0 h-1V160.0 h-1V160.0 h-1V160.5 h-1V160.5 h-1V160.5 h-1V160.5 h-1V161.5 h-1V161.5 h-1V162.0 h-1V162.5 h-1V162.0 h-1V162.5 h-1V163.0 h-1V163.5 h-1V162.5 h-1V163.0 h-1V164.0 h-1V164.0 h-1V164.5 h-1V164.5 h-1V165.5 h-1V164.5 h-1V165.5 h-1V166.0 h-1V164.5 h-1V166.0 h-1V166.0 h-1V165.5 h-1V165.5 h-1V166.0 h-1V166.0 h-1V166.0 h-1V166.0 h-1V166.0 h-1V166.0 h-1V166.0 h-1V166.0 h-1V166.0 h-1V166.0 h-1V166.0 h-1V166.0 h-1V166.0 h-1V166.0 h-1V166.0 h-1V166.0 h-1V166.0 h-1V166.0 h-1V166.0 h-1V164.5 h-1V166.0 h-1V166.0 h-1V166.0 h-1V166.0 h-1V166.0 h-1V166.0 h-1V166.0 h-1V166.0 h-1V166.0 h-1V166.0 h-1V166.0 h-1V164.5 h-1V166.0 h-1V164.5 h-1V166.0 h-1V166.0 h-1V166.0 h-1V166.0 h-1V166.0 h-1V166.0 h-1V166.0 h-1V166.0 h-1V166.0 h-1V166.0 h-1V166.0 h-1V166.0 h-1V166.0 h-1V166.0 h-1V166.0 h-1V166.0 h-1V166.0 h-1V166.0 h-1V166.0 h-1V166.0 h-1V166.0 h-1V166.0 h-1V166.0 h-1V166.0 h-1V166.0 h-1V166.0 h-1V166.0 h-1V166.0 h-1V164.5 h-1V166.0 h-1V166.0 h-1V166.0 h-1V164.5 h-1V166.0 h-1V166.0 h-1V166.0 h-1V166.0 h-1V166.0 h-1V166.0 h-1V166.0 h-1V166.0 h-1V164.5 h-1V166.0 h-1V166.0 h-1V166.0 h-1V166.0 h-1V166.0 h-1V166.0 h-1V166.0 h-1V166.0 h-1V166.0 h-1V166.0 h-1V166.0 h-1V166.0 h-1V166.0 h-1V166.0 h-1V166.0 h-1V166.0 h-1V166.0 h-1V166.0 h-1V166.0 h-1V166.0 h-1V166.0 h-1V166.0 h-1V166.0 h-1V166.0 h-1V166.0 h-1V166.0 h-1V166.0 h-1V166.0 h-1V166.0 h-1V166.0 h-1V166.0 h-1V166.0 h-1V166.0 h-1V166.0 h-1V166.0 h-1V166.0 h-1V166.0 h-1V166.0 h-1V166.0 h-1V166.0 h-1V166.0 h-1V166.0 h-1V166.0 h-1V166.0 h-1V166.0 h-1V166.0 h-1V166.0 h-1V166.0 h-1V166.0 h-1V166.0 h-1V166.0 h-1V164.5 h-1V166.0 h-1V166.0 h-1V166.0 h-1V166.0 h-1V166.0 h-1V166.0 h-1V166.0 h-1V166.0 h-1V164.5 h-1V166.0 h-1V166.0 h-1V166.0 h-1V166.0 h-1V166.0 h-1V166.0 h-1V166.0 h-1V164.5 h-1V166.0 h-1V166.0 h-1V166.0 h-1V166.0 h-1V166.0 h-1V166.0 h-1V166.0 h-1V166.0 h-1V166.0 h-1V166.0 h-1V166.0 h-1V166.0 h-1V166.0 h-1V166.0 h-1V166.0 h-1V166.0 h-1V166.0 h-1V166.0 h-1V166.0 h-1V166.0 h-1V166.0 h-1V166.0 h-1V166.0 h-1V166.0 h-1V164.5 h-1V166.0 h-1V164.5 h-1V164.5 h-1V166.0 h-1V166.0 h-1V166.0 h-1V166.0 h-1V166.0 h-1V166.0 h-1V166.0 h-1V166.0 h-1V166.0 h-1V166.0 h-1V166.0 h-1V166.0 h-1V166.0 h-1V166.0 h-1V166.0 h-1V166.0 h-1V166.0 h-1V166.0 h-1V166.0 h-1V166.0 h-1V166.0 h-1V166.0 h-1V166.0 h-1V164.5 h-1V164.5 h-1V166.0 h-1V166.0 h-1V166.0 h-1V166.0 h-1V166.0 h-1V166.0 h-1V166.0 h-1V166.0 h-1V166.0 h-1V166.0 h-1V166.0 h-1V166.0 h-1V166.0 h-1V166.0 h-1V166.0 h-1V166.0 h-1V166.0 h-1V166.0 h-1V164.5 h-1V166.0 h-1V166.0 h-1V166.0 h-1V166.0 h-1V166.0 h-1V166.0 h-1V166.0 h-1V166.0 h-1V166.0 h-1V164.5 h-1V166.0 h-1V166.0 h-1V166.0 h-1V166.0 h-1V164.5 h-1V166.0 h-1V166.0 h-1V166.0 h-1V166.0 h-1V166.0 h-1V166.0 h-1V166.0 h-1V166.0 h-1V166.0 h-1V166.0 h-1V166.0 h-1V164.5 h-1V166.0 h-1V166.0 h-1V166.0 h-1V166.0 h-1V166.0 h-1V166.0 h-1V166.0 h-1V166.0 h-1V166.0 h-1V166.0 h-1V166.0 h-1V166.0 h-1V166.0 h-1V166.0 h-1V166.0 h-1V166.0 h-1V166.0 h-1V166.0 h-1V166.0 h-1V164.5 h-1V166.0 h-1V166.0 h-1V166.0 h-1V166.0 h-1V166.0 h-1V166.0 h-1V166.0 h-1V166.0 h-1V166.0 h-1V166.0 h-1V166.0 h-1V164.5 h-1V166.0 h-1V166.0 h-1V166.0 h-1V166.0 h-1V166.0 h-1V166.0 h-1V166.0 h-1V164.5 h-1V166.0 h-1V166.0 h-1V165.5 h-1V165.5 h-1V165.5 h-1V165.0 h-1V165.0 h-1V165.0 h-1V164.5 h-1V164.5 h-1V164.0 h-1V164.0 h-1V164.0 h-1V163.5 h-1V164.0 h-1V163.5 h-1V162.5 h-1V162.5 h-1V162.5 h-1V162.0 h-1V162.5 h-1V163.0 h-1V163.5 h-1V163.5 h-1V163.5 h-1V164.5 h-1V164.0 h-1V164.0 h-1V163.5 h-1V163.5 h-1V163.5 h-1V163.5 h-1V164.0 h-1V163.5 h-1V164.0 h-1V163.5 h-1V163.5 h-1V164.5 h-1V163.5 h-1V164.0 h-1V164.0 h-1V163.5 h-1V164.0 h-1V163.5 h-1V164.0 h-1V164.0 h-1V163.5 h-1V163.5 h-1V164.0 h-1V164.0 h-1V165.0 h-1V164.5 h-1V165.5 h-1V165.5 h-1V166.0 h-1V166.0 h-1V164.5 h-1V166.0 h-1V166.0 h-1V166.0 h-1V166.0 h-1V166.0 h-1V166.0 h-1V166.0 h-1V166.0 h-1V166.0 h-1V164.5 h-1V166.0 h-1V166.0 h-1V166.0 h-1V166.0 h-1V166.0 h-1V166.0 h-1V166.0 h-1V166.0 h-1V166.0 h-1V166.0 h-1V166.0 h-1V166.0 h-1V166.0 h-1V166.0 h-1V166.0 h-1V166.0 h-1V166.0 h-1V166.0 h-1V166.0 h-1V166.0 h-1V166.0 h-1V166.0 h-1V166.0 h-1V166.0 h-1V166.0 h-1V166.0 h-1V164.5 h-1V166.0 h-1V164.5 h-1V166.0 h-1V166.0 h-1V166.0 h-1V166.0 h-1V166.0 h-1V166.0 h-1V166.0 h-1V166.0 h-1V166.0 h-1V166.0 h-1V166.0 h-1V166.0 h-1V166.0 h-1V166.0 h-1V166.0 h-1V166.0 h-1V166.0 h-1V166.0 h-1V166.0 h-1V164.5 h-1V166.0 h-1V166.0 h-1V164.5 h-1V166.0 h-1V166.0 h-1V166.0 h-1V166.0 h-1V166.0 h-1V164.5 h-1V166.0 h-1V166.0 h-1V166.0 h-1V166.0 h-1V166.0 h-1V166.0 h-1V166.0 h-1V166.0 h-1V166.0 h-1V166.0 h-1V164.5 h-1V166.0 h-1V166.0 h-1V166.0 h-1V166.0 h-1V166.0 h-1V166.0 h-1V166.0 h-1V166.0 h-1V166.0 h-1V166.0 h-1V166.0 h-1V166.0 h-1V166.0 h-1V166.0 h-1V166.0 h-1V166.0 h-1V166.0 h-1V166.0 h-1V166.0 h-1V166.0 h-1V166.0 h-1V166.0 h-1V166.0 h-1V166.0 h-1V166.0 h-1V166.0 h-1V166.0 h-1V166.0 h-1V166.0 h-1V166.0 h-1V166.0 h-1V166.0 h-1V166.0 h-1V166.0 h-1V166.0 h-1V166.0 h-1V166.0 h-1V166.0 h-1V166.0 h-1V166.0 h-1V166.0 h-1V166.0 h-1V166.0 h-1V166.0 h-1V166.0 h-1V166.0 h-1V166.0 h-1V166.0 h-1V166.0 h-1V166.0 h-1V166.0 h-1V166.0 h-1V166.0 h-1V166.0 h-1V166.0 h-1V166.0 h-1V166.0 h-1V166.0 h-1V166.0 h-1V166.0 h-1V166.0 h-1V166.0 h-1V166.0 h-1V166.0 h-1V166.0 h-1V166.0 h-1V164.5 h-1V166.0 h-1V166.0 h-1V166.0 h-1V166.0 h-1V166.0 h-1V166.0 h-1V166.0 h-1V166.0 h-1V166.0 h-1V166.0 h-1V166.0 h-1V166.0 h-1V166.0 h-1V166.0 h-1V166.0 h-1V166.0 h-1V166.0 h-1V166.0 h-1V166.0 h-1V166.0 h-1V166.0 h-1V166.0 h-1V166.0 h-1V166.0 h-1V166.0 h-1V166.0 h-1V166.0 h-1V166.0 h-1V166.0 h-1V164.5 h-1V166.0 h-1V166.0 h-1V166.0 h-1V166.0 h-1V166.0 h-1V166.0 h-1V166.0 h-1V166.0 h-1V166.0 h-1V166.0 h-1V166.0 h-1V164.5 h-1V166.0 h-1V166.0 h-1V166.0 h-1V166.0 h-1V164.5 h-1V164.5 h-1V166.0 h-1V164.5 h-1V166.0 h-1V166.0 h-1V166.0 h-1V166.0 h-1V166.0 h-1V166.0 h-1V166.0 h-1V164.5 h-1V166.0 h-1V166.0 h-1V166.0 h-1V166.0 h-1V166.0 h-1V166.0 h-1V166.0 h-1V166.0 h-1V166.0 h-1V166.0 h-1V166.0 h-1V166.0 h-1V166.0 h-1V166.0 h-1V166.0 h-1V166.0 h-1V166.0 h-1V166.0 h-1V166.0 h-1V166.0 h-1V164.5 h-1V166.0 h-1V166.0 h-1V166.0 h-1V166.0 h-1V166.0 h-1V166.0 h-1V166.0 h-1V166.0 h-1V166.0 h-1V166.0 h-1V166.0 h-1V164.5 h-1V166.0 h-1V166.0 h-1V164.5 h-1V166.0 h-1V166.0 h-1V166.0 h-1V166.0 h-1V166.0 h-1V166.0 h-1V166.0 h-1V166.0 h-1V166.0 h-1V166.0 h-1V166.0 h-1V166.0 h-1V166.0 h-1V166.0 h-1V166.0 h-1V166.0 h-1V166.0 h-1V166.0 h-1V164.5 h-1V166.0 h-1V166.0 h-1V166.0 h-1V164.5 h-1V166.0 h-1V164.5 h-1V166.0 h-1V166.0 h-1V166.0 h-1V166.0 h-1V166.0 h-1V166.0 h-1V166.0 h-1V166.0 h-1V166.0 h-1V166.0 h-1V164.5 h-1V166.0 h-1V166.0 h-1V166.0 h-1V166.0 h-1V166.0 h-1V166.0 h-1V166.0 h-1V164.5 h-1V166.0 h-1V166.0 h-1V166.0 h-1V166.0 h-1V166.0 h-1V166.0 h-1V166.0 h-1V164.5 h-1V164.5 h-1V164.5 h-1V166.0 h-1V166.0 h-1V166.0 h-1V166.0 h-1V166.0 h-1V164.5 h-1V166.0 h-1V166.0 h-1V166.0 h-1V166.0 h-1V166.0 h-1V166.0 h-1V166.0 h-1V166.0 h-1V166.0 h-1V166.0 h-1V166.0 h-1V166.0 h-1V166.0 h-1V166.0 h-1V166.0 h-1V166.0 h-1V166.0 h-1V166.0 h-1V166.0 h-1V164.5 h-1V166.0 h-1V166.0 h-1V166.0 h-1V166.0 h-1V166.0 h-1V166.0 h-1V166.0 h-1V166.0 h-1V166.0 h-1V164.5 h-1V166.0 h-1V166.0 h-1V166.0 h-1V166.0 h-1V164.5 h-1V166.0 h-1V166.0 h-1V164.5 h-1V166.0 h-1V166.0 h-1V166.0 h-1V166.0 h-1V166.0 h-1V166.0 h-1V166.0 h-1V166.0 h-1V166.0 h-1V164.5 h-1V164.5 h-1V166.0 h-1V166.0 h-1V166.0 h-1V164.5 h-1V166.0 h-1V166.0 h-1V166.0 h-1V166.0 h-1V166.0 h-1V166.0 h-1V166.0 h-1V166.0 h-1V166.0 h-1V166.0 h-1V166.0 h-1V166.0 h-1V166.0 h-1V166.0 h-1V166.0 h-1V166.0 h-1V166.0 h-1V164.5 h-1V166.0 h-1V166.0 h-1V166.0 h-1V166.0 h-1V166.0 h-1V164.5 h-1V166.0 h-1V164.5 h-1V164.5 h-1V166.0 h-1V164.5 h-1V166.0 h-1V166.0 h-1V166.0 h-1V166.0 h-1V166.0 h-1V166.0 h-1V166.0 h-1V166.0 h-1V166.0 h-1V166.0 h-1V166.0 h-1V166.0 h-1V166.0 h-1V164.5 h-1V166.0 h-1V166.0 h-1V166.0 h-1V166.0 h-1V166.0 h-1V166.0 h-1V166.0 h-1V166.0 h-1V166.0 h-1V166.0 h-1V164.5 h-1V164.5 h-1V166.0 h-1V166.0 h-1V166.0 h-1V166.0 h-1V166.0 h-1V166.0 h-1V166.0 h-1V166.0 h-1V166.0 h-1V166.0 h-1V166.0 h-1V166.0 h-1V166.0 h-1V166.0 h-1V166.0 h-1V164.5 h-1V166.0 h-1V166.0 h-1V166.0 h-1V166.0 h-1V166.0 h-1V166.0 h-1V166.0 h-1V166.0 h-1V166.0 h-1V166.0 h-1V166.0 h-1V166.0 h-1V166.0 h-1V166.0 h-1V164.5 h-1V166.0 h-1V166.0 h-1V166.0 h-1V166.0 h-1V166.0 h-1V166.0 h-1V164.5 h-1V166.0 h-1V166.0 h-1V166.0 h-1V166.0 h-1V166.0 h-1V166.0 h-1V166.0 h-1V166.0 h-1V166.0 h-1V166.0 h-1V166.0 h-1V166.0 h-1V166.0 h-1V166.0 h-1V166.0 h-1V164.5 h-1V166.0 h-1V166.0 h-1V166.0 h-1V166.0 h-1V166.0 h-1V166.0 h-1V166.0 h-1V166.0 h-1V164.5 h-1V164.5 h-1V166.0 h-1V166.0 h-1V166.0 h-1V166.0 h-1V166.0 h-1V166.0 h-1V166.0 h-1V166.0 h-1V166.0 h-1V163.5 h-1V164.0 h-1V163.5 h-1V163.5 h-1V164.0 h-1V164.5 h-1V163.5 h-1V163.0 h-1V163.5 h-1V162.5 h-1V162.5 h-1V163.0 h-1V163.5 h-1V162.5 h-1V162.5 h-1V162.0 h-1V163.0 h-1V161.5 h-1V162.0 h-1V163.0 h-1V162.0 h-1V162.5 h-1V163.5 h-1V163.0 h-1V163.5 h-1V164.5 h-1V163.0 h-1V165.0 h-1V164.5 h-1V165.5 h-1V164.5 h-1V165.0 h-1V164.0 h-1V164.5 h-1V163.5 h-1V164.0 h-1V162.5 h-1V162.0 h-1V163.5 h-1V164.0 h-1V164.0 h-1V164.5 h-1V164.0 h-1V165.0 h-1V164.5 h-1V164.0 h-1V165.5 h-1V165.5 h-1V164.5 h-1V165.5 h-1V163.5 h-1V164.0 h-1V164.0 h-1V163.5 h-1V163.0 h-1V163.0 h-1V164.0 h-1V164.0 h-1V164.5 h-1V164.0 h-1V164.5 h-1V165.0 h-1V164.0 h-1V163.0 h-1V163.5 h-1V163.0 h-1V162.5 h-1V162.5 h-1V163.0 h-1V164.0 h-1V163.0 h-1V163.5 h-1V163.5 h-1V163.5 h-1V164.5 h-1V164.5 h-1V164.5 h-1V164.5 h-1V164.0 h-1V164.0 h-1V165.0 h-1V165.5 h-1V164.5 h-1V164.5 h-1V163.0 h-1V163.5 h-1V163.5 h-1V163.0 h-1V163.5 h-1V163.5 h-1V164.0 h-1V162.5 h-1V163.5 h-1V164.0 h-1V164.0 h-1V165.0 h-1V164.5 h-1V165.0 h-1V164.0 h-1V164.0 h-1V164.0 h-1V164.5 h-1V164.0 h-1V163.5 h-1V162.5 h-1V163.5 h-1V163.0 h-1V163.5 h-1V163.0 h-1V163.5 h-1V165.0 h-1V164.5 h-1V164.5 h-1V163.0 h-1V163.5 h-1V164.0 h-1V162.5 h-1V162.5 h-1V163.0 h-1V162.5 h-1V164.0 h-1V164.0 h-1V163.5 h-1V163.5 h-1V164.0 h-1V164.0 h-1V164.0 h-1V164.5 h-1V163.5 h-1V164.5 h-1V165.0 h-1V164.0 h-1V164.5 h-1V165.0 h-1V160.5 h-1V160.5 h-1V160.5 h-1Z" fill="#5ed3aa"/>
</svg>
<div class="a" style="left:413px;top:136px;width:9px;height:31px;background:#2b2b2b;border:1.5px solid #6c6c6c;border-radius:3px"></div>
<div class="a" style="left:417px;top:139px;width:1.5px;height:25px;background:#6c6c6c"></div>
<div class="a" style="left:1444px;top:136px;width:9px;height:31px;background:#2b2b2b;border:1.5px solid #6c6c6c;border-radius:3px"></div>
<div class="a" style="left:1447.5px;top:139px;width:1.5px;height:25px;background:#6c6c6c"></div>
<!-- overview buttons -->
<svg style="left:1464px;top:140.6px" width="22" height="22" viewBox="0 0 22 22">
 <circle cx="10.8" cy="10.8" r="5.2" fill="none" stroke="#4f4f4f" stroke-width="1.6"/><path d="M8 10.8H13.6" stroke="#4f4f4f" stroke-width="1.5"/><path d="M14.6 14.6L19.4 19.2" stroke="#4f4f4f" stroke-width="2.4"/>
 <path d="M10.8 0L13.8 3.4H7.8ZM10.8 21.6L13.8 18.2H7.8ZM0 10.8L3.6 7.8V13.8ZM21.4 10.8L17.8 7.8V13.8Z" fill="#4f4f4f"/>
</svg>
<svg style="left:1500px;top:143px" width="20" height="17" viewBox="0 0 20 17">
 <rect x="1.7" y="0.7" width="16.8" height="15.6" rx="1.6" fill="#474747" stroke="#b9b9b9" stroke-width="1.4"/>
 <path d="M2 3.6H18.2M2 9.4H18.2" stroke="#b9b9b9" stroke-width="1.4"/>
</svg>
<!-- ruler -->
<div class="a" style="left:416.5px;top:189.5px;width:1033px;height:34px;background:#232323;border-top:1.5px solid #121212;border-left:1.5px solid #121212;border-right:1.5px solid #121212"></div>
<div class="rul">
<div class="t" style="left:421px">hms</div>
<div class="t" style="left:507.0px;width:40px;text-align:center">0:30</div>
<div class="t" style="left:616.6px;width:40px;text-align:center">1:00</div>
<div class="t" style="left:726.2px;width:40px;text-align:center">1:30</div>
<div class="t" style="left:835.9px;width:40px;text-align:center">2:00</div>
<div class="t" style="left:945.5px;width:40px;text-align:center">2:30</div>
<div class="t" style="left:1055.1px;width:40px;text-align:center">3:00</div>
<div class="t" style="left:1164.7px;width:40px;text-align:center">3:30</div>
<div class="t" style="left:1274.3px;width:40px;text-align:center">4:00</div>
<div class="t" style="left:1383.9px;width:40px;text-align:center">4:30</div>
</div>
<div class="a" style="left:471px;top:217px;width:2px;height:7px;background:#b0b0b0"></div>
<div class="a" style="left:526px;top:213px;width:2px;height:11px;background:#b0b0b0"></div>
<div class="a" style="left:581px;top:217px;width:2px;height:7px;background:#b0b0b0"></div>
<div class="a" style="left:636px;top:213px;width:2px;height:11px;background:#b0b0b0"></div>
<div class="a" style="left:690px;top:217px;width:2px;height:7px;background:#b0b0b0"></div>
<div class="a" style="left:745px;top:213px;width:2px;height:11px;background:#b0b0b0"></div>
<div class="a" style="left:800px;top:217px;width:2px;height:7px;background:#b0b0b0"></div>
<div class="a" style="left:855px;top:213px;width:2px;height:11px;background:#b0b0b0"></div>
<div class="a" style="left:910px;top:217px;width:2px;height:7px;background:#b0b0b0"></div>
<div class="a" style="left:964px;top:213px;width:2px;height:11px;background:#b0b0b0"></div>
<div class="a" style="left:1019px;top:217px;width:2px;height:7px;background:#b0b0b0"></div>
<div class="a" style="left:1074px;top:213px;width:2px;height:11px;background:#b0b0b0"></div>
<div class="a" style="left:1129px;top:217px;width:2px;height:7px;background:#b0b0b0"></div>
<div class="a" style="left:1184px;top:213px;width:2px;height:11px;background:#b0b0b0"></div>
<div class="a" style="left:1239px;top:217px;width:2px;height:7px;background:#b0b0b0"></div>
<div class="a" style="left:1293px;top:213px;width:2px;height:11px;background:#b0b0b0"></div>
<div class="a" style="left:1348px;top:217px;width:2px;height:7px;background:#b0b0b0"></div>
<div class="a" style="left:1403px;top:213px;width:2px;height:11px;background:#b0b0b0"></div>
<!-- snapping toggle -->
<div class="a" style="left:1457px;top:192px;width:27px;height:27px;background:#171717;border:1px solid #303030;border-radius:3px"></div>
<svg style="left:1463px;top:197.5px" width="16.4" height="16.4" viewBox="0 0 16 16">
 <path d="M8 0.2C12.6 0.2 16 3.6 16 8C16 10.6 15.6 13.2 14.9 16H10.1C10.6 13 10.5 10.2 10.2 8.6C10 7 9.2 6 8 6C6.8 6 6 7 5.8 8.6C5.5 10.2 5.4 13 5.9 16H1.1C0.4 13.2 0 10.6 0 8C0 3.6 3.4 0.2 8 0.2Z" fill="#2f8bea"/>
 <path d="M1.6 10.4H5.2V13.6H1.9ZM10.8 10.4H14.4L14.1 13.6H10.8Z" fill="#1b5cb0"/>
</svg>
<!-- waveform display -->
<div class="a" style="left:417px;top:222px;width:1125px;height:582px;background:#040404"></div>
<svg id="wave" style="left:0;top:0" width="1556" height="866" viewBox="0 0 1556 866" shape-rendering="crispEdges">
<rect x="419" y="223" width="1030" height="581" fill="#000"/>
<rect x="419" y="265" width="1030" height="1" fill="#1a4024"/>
<rect x="419" y="469" width="1030" height="1" fill="#1a4024"/>
<rect x="419" y="295" width="1030" height="1" fill="#1a4024"/>
<rect x="419" y="440" width="1030" height="1" fill="#1a4024"/>
<rect x="419" y="316" width="1030" height="1" fill="#1a4024"/>
<rect x="419" y="419" width="1030" height="1" fill="#1a4024"/>
<rect x="419" y="349" width="1030" height="1" fill="#1a4024"/>
<rect x="419" y="386" width="1030" height="1" fill="#1a4024"/>
<rect x="419" y="555" width="1030" height="1" fill="#1a4024"/>
<rect x="419" y="759" width="1030" height="1" fill="#1a4024"/>
<rect x="419" y="585" width="1030" height="1" fill="#1a4024"/>
<rect x="419" y="730" width="1030" height="1" fill="#1a4024"/>
<rect x="419" y="606" width="1030" height="1" fill="#1a4024"/>
<rect x="419" y="709" width="1030" height="1" fill="#1a4024"/>
<rect x="419" y="639" width="1030" height="1" fill="#1a4024"/>
<rect x="419" y="676" width="1030" height="1" fill="#1a4024"/>
<rect x="527" y="223" width="1" height="579" fill="#1a4024"/>
<rect x="636" y="223" width="1" height="579" fill="#1a4024"/>
<rect x="746" y="223" width="1" height="579" fill="#1a4024"/>
<rect x="855" y="223" width="1" height="579" fill="#1a4024"/>
<rect x="965" y="223" width="1" height="579" fill="#1a4024"/>
<rect x="1075" y="223" width="1" height="579" fill="#1a4024"/>
<rect x="1184" y="223" width="1" height="579" fill="#1a4024"/>
<rect x="1294" y="223" width="1" height="579" fill="#1a4024"/>
<rect x="1403" y="223" width="1" height="579" fill="#1a4024"/>
<rect x="419" y="223" width="1030" height="1" fill="#1a4024"/>
<rect x="419" y="800" width="1030" height="1" fill="#1a4024"/>
<path d="M420 367V344 h1V351 h1V346 h1V342 h1V324 h1V308 h1V338 h1V315 h1V315 h1V313 h1V336 h1V295 h1V280 h1V280 h1V282 h1V259 h1V278 h1V295 h1V312 h1V306 h1V251 h1V302 h1V338 h1V300 h1V296 h1V302 h1V307 h1V297 h1V287 h1V259 h1V313 h1V278 h1V298 h1V294 h1V256 h1V251 h1V287 h1V272 h1V296 h1V300 h1V303 h1V304 h1V320 h1V301 h1V297 h1V303 h1V308 h1V301 h1V294 h1V291 h1V287 h1V287 h1V286 h1V292 h1V297 h1V291 h1V286 h1V284 h1V282 h1V285 h1V288 h1V286 h1V284 h1V252 h1V292 h1V293 h1V273 h1V301 h1V321 h1V269 h1V255 h1V317 h1V279 h1V301 h1V295 h1V295 h1V277 h1V272 h1V252 h1V306 h1V274 h1V338 h1V306 h1V331 h1V312 h1V312 h1V246 h1V300 h1V319 h1V294 h1V301 h1V279 h1V281 h1V292 h1V303 h1V296 h1V289 h1V242 h1V293 h1V281 h1V305 h1V323 h1V302 h1V310 h1V275 h1V340 h1V312 h1V303 h1V292 h1V294 h1V260 h1V250 h1V248 h1V293 h1V290 h1V270 h1V279 h1V262 h1V293 h1V294 h1V295 h1V287 h1V306 h1V285 h1V291 h1V248 h1V259 h1V293 h1V248 h1V328 h1V269 h1V300 h1V295 h1V325 h1V265 h1V309 h1V310 h1V308 h1V224 h1V225 h1V225 h1V259 h1V224 h1V225 h1V227 h1V228 h1V227 h1V225 h1V224 h1V250 h1V262 h1V231 h1V224 h1V225 h1V225 h1V225 h1V226 h1V251 h1V225 h1V224 h1V227 h1V242 h1V225 h1V272 h1V225 h1V226 h1V225 h1V224 h1V225 h1V233 h1V225 h1V225 h1V224 h1V224 h1V225 h1V225 h1V229 h1V225 h1V234 h1V262 h1V224 h1V293 h1V225 h1V225 h1V228 h1V240 h1V225 h1V224 h1V225 h1V224 h1V224 h1V225 h1V225 h1V225 h1V225 h1V226 h1V225 h1V225 h1V226 h1V225 h1V226 h1V228 h1V225 h1V225 h1V224 h1V241 h1V242 h1V225 h1V287 h1V225 h1V224 h1V225 h1V224 h1V224 h1V226 h1V235 h1V260 h1V224 h1V235 h1V226 h1V224 h1V228 h1V236 h1V276 h1V224 h1V224 h1V235 h1V225 h1V281 h1V235 h1V233 h1V225 h1V226 h1V224 h1V227 h1V224 h1V225 h1V225 h1V234 h1V224 h1V225 h1V225 h1V226 h1V254 h1V225 h1V248 h1V225 h1V225 h1V225 h1V226 h1V231 h1V256 h1V224 h1V224 h1V225 h1V252 h1V224 h1V241 h1V224 h1V224 h1V225 h1V225 h1V235 h1V227 h1V224 h1V224 h1V227 h1V225 h1V237 h1V224 h1V225 h1V224 h1V225 h1V270 h1V226 h1V289 h1V224 h1V225 h1V226 h1V229 h1V224 h1V225 h1V251 h1V226 h1V225 h1V225 h1V224 h1V227 h1V233 h1V229 h1V225 h1V229 h1V224 h1V237 h1V224 h1V229 h1V228 h1V224 h1V224 h1V225 h1V225 h1V233 h1V229 h1V225 h1V234 h1V224 h1V252 h1V225 h1V225 h1V247 h1V226 h1V229 h1V249 h1V224 h1V224 h1V225 h1V236 h1V226 h1V224 h1V224 h1V238 h1V225 h1V225 h1V237 h1V224 h1V225 h1V225 h1V226 h1V225 h1V225 h1V225 h1V225 h1V226 h1V225 h1V225 h1V224 h1V226 h1V224 h1V235 h1V224 h1V250 h1V238 h1V225 h1V225 h1V225 h1V225 h1V226 h1V225 h1V226 h1V224 h1V225 h1V225 h1V227 h1V235 h1V224 h1V230 h1V256 h1V267 h1V228 h1V225 h1V225 h1V228 h1V225 h1V225 h1V225 h1V224 h1V225 h1V245 h1V224 h1V225 h1V225 h1V226 h1V230 h1V229 h1V229 h1V225 h1V228 h1V227 h1V226 h1V227 h1V224 h1V278 h1V224 h1V227 h1V234 h1V225 h1V224 h1V225 h1V241 h1V241 h1V225 h1V248 h1V228 h1V225 h1V225 h1V232 h1V255 h1V224 h1V228 h1V225 h1V225 h1V225 h1V226 h1V238 h1V224 h1V224 h1V227 h1V225 h1V225 h1V226 h1V254 h1V225 h1V224 h1V236 h1V238 h1V226 h1V235 h1V239 h1V251 h1V229 h1V226 h1V224 h1V225 h1V224 h1V226 h1V225 h1V225 h1V250 h1V225 h1V227 h1V225 h1V239 h1V226 h1V288 h1V229 h1V225 h1V241 h1V225 h1V225 h1V225 h1V224 h1V225 h1V226 h1V225 h1V248 h1V225 h1V224 h1V225 h1V225 h1V225 h1V230 h1V228 h1V237 h1V226 h1V232 h1V225 h1V239 h1V227 h1V227 h1V250 h1V282 h1V229 h1V225 h1V226 h1V239 h1V225 h1V226 h1V225 h1V224 h1V224 h1V225 h1V226 h1V227 h1V224 h1V224 h1V226 h1V227 h1V231 h1V226 h1V225 h1V225 h1V230 h1V227 h1V229 h1V240 h1V225 h1V225 h1V226 h1V225 h1V225 h1V226 h1V238 h1V232 h1V254 h1V247 h1V228 h1V224 h1V224 h1V226 h1V224 h1V227 h1V235 h1V231 h1V225 h1V224 h1V224 h1V244 h1V224 h1V224 h1V225 h1V225 h1V226 h1V224 h1V253 h1V229 h1V227 h1V224 h1V224 h1V229 h1V227 h1V226 h1V225 h1V225 h1V225 h1V226 h1V226 h1V229 h1V225 h1V237 h1V224 h1V225 h1V272 h1V226 h1V226 h1V227 h1V227 h1V224 h1V234 h1V225 h1V224 h1V224 h1V225 h1V228 h1V225 h1V229 h1V226 h1V224 h1V225 h1V224 h1V225 h1V226 h1V224 h1V225 h1V225 h1V225 h1V253 h1V249 h1V235 h1V226 h1V243 h1V240 h1V225 h1V226 h1V225 h1V225 h1V224 h1V224 h1V226 h1V225 h1V228 h1V226 h1V225 h1V224 h1V227 h1V228 h1V226 h1V225 h1V226 h1V225 h1V230 h1V224 h1V225 h1V225 h1V255 h1V233 h1V225 h1V245 h1V225 h1V228 h1V228 h1V224 h1V224 h1V225 h1V224 h1V227 h1V224 h1V225 h1V225 h1V225 h1V226 h1V224 h1V237 h1V237 h1V225 h1V225 h1V230 h1V224 h1V224 h1V224 h1V225 h1V224 h1V224 h1V287 h1V225 h1V224 h1V224 h1V225 h1V224 h1V225 h1V224 h1V225 h1V235 h1V233 h1V239 h1V266 h1V251 h1V262 h1V262 h1V262 h1V262 h1V262 h1V268 h1V242 h1V277 h1V281 h1V283 h1V286 h1V285 h1V241 h1V289 h1V256 h1V289 h1V284 h1V259 h1V288 h1V290 h1V293 h1V292 h1V292 h1V294 h1V257 h1V299 h1V301 h1V306 h1V322 h1V327 h1V333 h1V337 h1V336 h1V331 h1V309 h1V295 h1V300 h1V269 h1V277 h1V228 h1V243 h1V235 h1V228 h1V227 h1V225 h1V224 h1V236 h1V225 h1V224 h1V224 h1V280 h1V229 h1V228 h1V225 h1V225 h1V228 h1V225 h1V237 h1V224 h1V289 h1V225 h1V226 h1V250 h1V226 h1V225 h1V274 h1V229 h1V242 h1V225 h1V226 h1V230 h1V226 h1V224 h1V225 h1V226 h1V225 h1V225 h1V273 h1V225 h1V232 h1V233 h1V225 h1V224 h1V229 h1V225 h1V225 h1V228 h1V225 h1V225 h1V225 h1V225 h1V224 h1V226 h1V228 h1V231 h1V227 h1V226 h1V225 h1V226 h1V227 h1V224 h1V225 h1V226 h1V224 h1V224 h1V225 h1V227 h1V225 h1V225 h1V224 h1V225 h1V225 h1V225 h1V226 h1V225 h1V225 h1V224 h1V225 h1V228 h1V227 h1V226 h1V224 h1V224 h1V225 h1V227 h1V226 h1V224 h1V224 h1V225 h1V225 h1V226 h1V225 h1V224 h1V233 h1V225 h1V225 h1V227 h1V226 h1V229 h1V227 h1V225 h1V227 h1V224 h1V225 h1V225 h1V245 h1V224 h1V229 h1V225 h1V224 h1V226 h1V250 h1V225 h1V226 h1V229 h1V224 h1V224 h1V234 h1V225 h1V225 h1V225 h1V224 h1V226 h1V224 h1V251 h1V244 h1V225 h1V225 h1V231 h1V224 h1V240 h1V225 h1V225 h1V225 h1V228 h1V225 h1V225 h1V225 h1V225 h1V225 h1V226 h1V226 h1V226 h1V225 h1V226 h1V225 h1V225 h1V229 h1V225 h1V225 h1V243 h1V224 h1V225 h1V225 h1V225 h1V224 h1V225 h1V225 h1V225 h1V225 h1V224 h1V225 h1V226 h1V235 h1V224 h1V225 h1V224 h1V226 h1V224 h1V225 h1V240 h1V225 h1V225 h1V224 h1V227 h1V225 h1V227 h1V248 h1V229 h1V230 h1V225 h1V227 h1V265 h1V225 h1V225 h1V225 h1V225 h1V225 h1V224 h1V231 h1V226 h1V226 h1V224 h1V225 h1V225 h1V233 h1V229 h1V225 h1V236 h1V225 h1V228 h1V249 h1V225 h1V225 h1V225 h1V226 h1V224 h1V240 h1V228 h1V225 h1V225 h1V225 h1V225 h1V225 h1V226 h1V235 h1V225 h1V228 h1V225 h1V225 h1V225 h1V226 h1V226 h1V224 h1V243 h1V227 h1V224 h1V224 h1V247 h1V226 h1V225 h1V225 h1V272 h1V243 h1V225 h1V248 h1V236 h1V224 h1V224 h1V225 h1V224 h1V231 h1V240 h1V228 h1V246 h1V237 h1V225 h1V226 h1V275 h1V233 h1V225 h1V225 h1V225 h1V225 h1V237 h1V280 h1V227 h1V224 h1V225 h1V225 h1V253 h1V224 h1V263 h1V225 h1V224 h1V224 h1V229 h1V224 h1V225 h1V224 h1V232 h1V231 h1V225 h1V241 h1V224 h1V224 h1V228 h1V225 h1V226 h1V251 h1V226 h1V235 h1V225 h1V224 h1V228 h1V254 h1V229 h1V225 h1V226 h1V225 h1V224 h1V253 h1V224 h1V242 h1V247 h1V256 h1V225 h1V252 h1V225 h1V226 h1V256 h1V228 h1V254 h1V272 h1V285 h1V286 h1V309 h1V296 h1V296 h1V303 h1V305 h1V293 h1V296 h1V298 h1V318 h1V332 h1V330 h1V320 h1V327 h1V342 h1V349 h1V352 h1V353 h1V353 h1V356 h1V360 h1V360 h1V359 h1V361 h1V362 h1V362 h1V364 h1V364 h1V364 h1V365 h1V365 h1V365 h1V365 h1V366 h1V366 h1V366 h1V366 h1V367 h1V367 h1V367 h1V367 h1V367 h1V367 h1V367 h1V367 h1V367 h1V367 h1V367 h1V367 h1V367 h1V367 h1V367 h1V367 h1V367 h1V367 h1V367 h1V367 h1V367V368V368 h-1V368 h-1V368 h-1V368 h-1V368 h-1V368 h-1V368 h-1V368 h-1V368 h-1V368 h-1V368 h-1V368 h-1V368 h-1V368 h-1V368 h-1V368 h-1V368 h-1V368 h-1V368 h-1V369 h-1V369 h-1V369 h-1V369 h-1V369 h-1V369 h-1V370 h-1V370 h-1V370 h-1V371 h-1V371 h-1V372 h-1V373 h-1V373 h-1V374 h-1V376 h-1V377 h-1V375 h-1V377 h-1V380 h-1V381 h-1V383 h-1V391 h-1V395 h-1V407 h-1V408 h-1V404 h-1V404 h-1V402 h-1V435 h-1V425 h-1V431 h-1V450 h-1V438 h-1V438 h-1V428 h-1V438 h-1V459 h-1V480 h-1V480 h-1V492 h-1V504 h-1V505 h-1V473 h-1V472 h-1V507 h-1V508 h-1V508 h-1V508 h-1V477 h-1V487 h-1V508 h-1V509 h-1V508 h-1V508 h-1V508 h-1V504 h-1V507 h-1V507 h-1V508 h-1V488 h-1V508 h-1V508 h-1V508 h-1V454 h-1V507 h-1V507 h-1V494 h-1V508 h-1V507 h-1V508 h-1V508 h-1V509 h-1V508 h-1V505 h-1V509 h-1V508 h-1V508 h-1V507 h-1V479 h-1V508 h-1V508 h-1V507 h-1V508 h-1V506 h-1V505 h-1V507 h-1V508 h-1V507 h-1V508 h-1V508 h-1V507 h-1V508 h-1V498 h-1V508 h-1V486 h-1V508 h-1V506 h-1V507 h-1V508 h-1V508 h-1V508 h-1V473 h-1V506 h-1V488 h-1V508 h-1V507 h-1V449 h-1V508 h-1V508 h-1V508 h-1V508 h-1V508 h-1V494 h-1V508 h-1V507 h-1V507 h-1V508 h-1V509 h-1V507 h-1V507 h-1V508 h-1V507 h-1V453 h-1V508 h-1V509 h-1V508 h-1V493 h-1V504 h-1V491 h-1V507 h-1V494 h-1V504 h-1V504 h-1V508 h-1V508 h-1V507 h-1V505 h-1V485 h-1V507 h-1V508 h-1V508 h-1V508 h-1V475 h-1V500 h-1V489 h-1V508 h-1V509 h-1V508 h-1V508 h-1V508 h-1V508 h-1V507 h-1V506 h-1V504 h-1V482 h-1V489 h-1V508 h-1V471 h-1V469 h-1V486 h-1V507 h-1V505 h-1V507 h-1V507 h-1V508 h-1V507 h-1V494 h-1V508 h-1V507 h-1V507 h-1V508 h-1V477 h-1V507 h-1V465 h-1V489 h-1V504 h-1V494 h-1V508 h-1V508 h-1V494 h-1V454 h-1V509 h-1V507 h-1V456 h-1V507 h-1V507 h-1V443 h-1V507 h-1V507 h-1V507 h-1V508 h-1V508 h-1V507 h-1V508 h-1V508 h-1V507 h-1V508 h-1V507 h-1V508 h-1V508 h-1V480 h-1V509 h-1V508 h-1V508 h-1V509 h-1V508 h-1V503 h-1V507 h-1V507 h-1V507 h-1V509 h-1V507 h-1V508 h-1V483 h-1V504 h-1V499 h-1V488 h-1V508 h-1V448 h-1V508 h-1V508 h-1V507 h-1V508 h-1V507 h-1V507 h-1V508 h-1V504 h-1V508 h-1V507 h-1V505 h-1V508 h-1V507 h-1V508 h-1V504 h-1V508 h-1V507 h-1V508 h-1V495 h-1V508 h-1V480 h-1V508 h-1V478 h-1V508 h-1V508 h-1V486 h-1V508 h-1V508 h-1V508 h-1V508 h-1V508 h-1V508 h-1V508 h-1V507 h-1V503 h-1V508 h-1V498 h-1V509 h-1V507 h-1V458 h-1V507 h-1V507 h-1V508 h-1V480 h-1V507 h-1V507 h-1V506 h-1V507 h-1V508 h-1V508 h-1V508 h-1V507 h-1V508 h-1V508 h-1V507 h-1V508 h-1V507 h-1V507 h-1V508 h-1V507 h-1V508 h-1V456 h-1V508 h-1V497 h-1V507 h-1V507 h-1V508 h-1V496 h-1V480 h-1V507 h-1V508 h-1V508 h-1V508 h-1V508 h-1V509 h-1V508 h-1V507 h-1V507 h-1V499 h-1V508 h-1V508 h-1V507 h-1V508 h-1V508 h-1V505 h-1V507 h-1V507 h-1V508 h-1V508 h-1V504 h-1V495 h-1V508 h-1V508 h-1V508 h-1V456 h-1V507 h-1V448 h-1V507 h-1V508 h-1V508 h-1V508 h-1V484 h-1V508 h-1V507 h-1V507 h-1V507 h-1V508 h-1V508 h-1V504 h-1V504 h-1V507 h-1V508 h-1V507 h-1V490 h-1V508 h-1V508 h-1V507 h-1V507 h-1V507 h-1V504 h-1V472 h-1V506 h-1V491 h-1V476 h-1V460 h-1V498 h-1V479 h-1V440 h-1V410 h-1V401 h-1V398 h-1V405 h-1V411 h-1V417 h-1V412 h-1V418 h-1V474 h-1V425 h-1V497 h-1V439 h-1V502 h-1V438 h-1V424 h-1V428 h-1V447 h-1V442 h-1V437 h-1V441 h-1V485 h-1V446 h-1V447 h-1V450 h-1V454 h-1V452 h-1V486 h-1V438 h-1V461 h-1V485 h-1V449 h-1V504 h-1V481 h-1V507 h-1V486 h-1V482 h-1V489 h-1V495 h-1V472 h-1V498 h-1V508 h-1V506 h-1V507 h-1V507 h-1V507 h-1V507 h-1V508 h-1V508 h-1V507 h-1V497 h-1V497 h-1V502 h-1V508 h-1V506 h-1V500 h-1V453 h-1V507 h-1V507 h-1V507 h-1V503 h-1V507 h-1V508 h-1V493 h-1V491 h-1V508 h-1V507 h-1V508 h-1V508 h-1V499 h-1V507 h-1V507 h-1V501 h-1V508 h-1V508 h-1V500 h-1V508 h-1V508 h-1V468 h-1V507 h-1V508 h-1V499 h-1V508 h-1V505 h-1V507 h-1V508 h-1V508 h-1V508 h-1V508 h-1V507 h-1V507 h-1V498 h-1V508 h-1V508 h-1V508 h-1V508 h-1V508 h-1V508 h-1V507 h-1V506 h-1V508 h-1V508 h-1V496 h-1V508 h-1V508 h-1V507 h-1V507 h-1V508 h-1V503 h-1V507 h-1V507 h-1V507 h-1V507 h-1V497 h-1V508 h-1V507 h-1V508 h-1V499 h-1V500 h-1V508 h-1V508 h-1V505 h-1V504 h-1V507 h-1V507 h-1V507 h-1V508 h-1V505 h-1V505 h-1V494 h-1V497 h-1V507 h-1V507 h-1V507 h-1V507 h-1V508 h-1V508 h-1V470 h-1V507 h-1V507 h-1V506 h-1V464 h-1V504 h-1V501 h-1V508 h-1V508 h-1V492 h-1V507 h-1V508 h-1V508 h-1V496 h-1V481 h-1V508 h-1V501 h-1V508 h-1V504 h-1V508 h-1V508 h-1V507 h-1V508 h-1V508 h-1V507 h-1V508 h-1V481 h-1V507 h-1V508 h-1V505 h-1V508 h-1V500 h-1V507 h-1V504 h-1V504 h-1V507 h-1V507 h-1V502 h-1V508 h-1V508 h-1V504 h-1V507 h-1V507 h-1V505 h-1V508 h-1V508 h-1V507 h-1V507 h-1V494 h-1V507 h-1V507 h-1V507 h-1V461 h-1V508 h-1V508 h-1V506 h-1V482 h-1V507 h-1V476 h-1V508 h-1V507 h-1V507 h-1V508 h-1V500 h-1V507 h-1V508 h-1V507 h-1V507 h-1V493 h-1V508 h-1V508 h-1V507 h-1V508 h-1V507 h-1V479 h-1V508 h-1V475 h-1V508 h-1V500 h-1V507 h-1V507 h-1V508 h-1V504 h-1V507 h-1V500 h-1V508 h-1V492 h-1V507 h-1V508 h-1V500 h-1V507 h-1V508 h-1V505 h-1V500 h-1V508 h-1V508 h-1V503 h-1V506 h-1V507 h-1V508 h-1V505 h-1V494 h-1V507 h-1V508 h-1V507 h-1V508 h-1V507 h-1V470 h-1V461 h-1V507 h-1V491 h-1V507 h-1V479 h-1V489 h-1V507 h-1V507 h-1V508 h-1V508 h-1V505 h-1V507 h-1V507 h-1V506 h-1V509 h-1V500 h-1V508 h-1V503 h-1V508 h-1V507 h-1V497 h-1V472 h-1V505 h-1V509 h-1V508 h-1V487 h-1V497 h-1V506 h-1V506 h-1V508 h-1V508 h-1V508 h-1V507 h-1V508 h-1V504 h-1V506 h-1V507 h-1V508 h-1V508 h-1V507 h-1V501 h-1V508 h-1V508 h-1V469 h-1V494 h-1V508 h-1V507 h-1V502 h-1V507 h-1V504 h-1V509 h-1V508 h-1V507 h-1V503 h-1V508 h-1V504 h-1V505 h-1V508 h-1V507 h-1V505 h-1V502 h-1V508 h-1V498 h-1V508 h-1V504 h-1V507 h-1V508 h-1V507 h-1V509 h-1V508 h-1V506 h-1V508 h-1V507 h-1V507 h-1V499 h-1V508 h-1V508 h-1V505 h-1V507 h-1V482 h-1V505 h-1V478 h-1V507 h-1V504 h-1V508 h-1V508 h-1V508 h-1V507 h-1V508 h-1V493 h-1V499 h-1V478 h-1V504 h-1V508 h-1V507 h-1V507 h-1V508 h-1V507 h-1V500 h-1V506 h-1V508 h-1V507 h-1V508 h-1V450 h-1V507 h-1V507 h-1V508 h-1V505 h-1V508 h-1V490 h-1V508 h-1V458 h-1V495 h-1V472 h-1V508 h-1V507 h-1V507 h-1V507 h-1V508 h-1V508 h-1V482 h-1V508 h-1V446 h-1V507 h-1V508 h-1V508 h-1V508 h-1V508 h-1V466 h-1V507 h-1V499 h-1V508 h-1V506 h-1V508 h-1V508 h-1V476 h-1V500 h-1V508 h-1V507 h-1V507 h-1V503 h-1V504 h-1V508 h-1V508 h-1V504 h-1V487 h-1V508 h-1V507 h-1V507 h-1V502 h-1V507 h-1V440 h-1V471 h-1V507 h-1V506 h-1V508 h-1V508 h-1V508 h-1V508 h-1V507 h-1V484 h-1V508 h-1V508 h-1V507 h-1V507 h-1V495 h-1V508 h-1V508 h-1V508 h-1V499 h-1V507 h-1V508 h-1V504 h-1V506 h-1V508 h-1V508 h-1V508 h-1V509 h-1V508 h-1V504 h-1V507 h-1V507 h-1V508 h-1V508 h-1V508 h-1V508 h-1V456 h-1V506 h-1V509 h-1V508 h-1V508 h-1V508 h-1V509 h-1V509 h-1V507 h-1V507 h-1V507 h-1V508 h-1V507 h-1V503 h-1V504 h-1V461 h-1V507 h-1V508 h-1V508 h-1V504 h-1V500 h-1V494 h-1V507 h-1V508 h-1V508 h-1V488 h-1V508 h-1V496 h-1V508 h-1V465 h-1V508 h-1V508 h-1V500 h-1V508 h-1V504 h-1V507 h-1V508 h-1V508 h-1V508 h-1V508 h-1V508 h-1V507 h-1V508 h-1V507 h-1V505 h-1V507 h-1V506 h-1V507 h-1V508 h-1V479 h-1V501 h-1V507 h-1V508 h-1V504 h-1V507 h-1V507 h-1V508 h-1V507 h-1V508 h-1V507 h-1V508 h-1V502 h-1V508 h-1V507 h-1V508 h-1V508 h-1V505 h-1V504 h-1V508 h-1V507 h-1V507 h-1V508 h-1V508 h-1V508 h-1V507 h-1V508 h-1V508 h-1V507 h-1V501 h-1V507 h-1V508 h-1V507 h-1V509 h-1V507 h-1V507 h-1V508 h-1V492 h-1V508 h-1V492 h-1V508 h-1V508 h-1V507 h-1V494 h-1V434 h-1V438 h-1V443 h-1V446 h-1V421 h-1V487 h-1V444 h-1V477 h-1V436 h-1V490 h-1V428 h-1V495 h-1V506 h-1V401 h-1V445 h-1V485 h-1V458 h-1V483 h-1V504 h-1V458 h-1V475 h-1V441 h-1V440 h-1V440 h-1V433 h-1V493 h-1V426 h-1V426 h-1V441 h-1V456 h-1V463 h-1V468 h-1V497 h-1V457 h-1V506 h-1V506 h-1V445 h-1V448 h-1V441 h-1V436 h-1V418 h-1V495 h-1V405 h-1V492 h-1V440 h-1V449 h-1V490 h-1V493 h-1V473 h-1V452 h-1V439 h-1V487 h-1V409 h-1V432 h-1V429 h-1V429 h-1V410 h-1V439 h-1V444 h-1V448 h-1V444 h-1V439 h-1V451 h-1V464 h-1V454 h-1V504 h-1V443 h-1V441 h-1V508 h-1V503 h-1V450 h-1V484 h-1V448 h-1V441 h-1V445 h-1V497 h-1V450 h-1V469 h-1V445 h-1V473 h-1V445 h-1V449 h-1V474 h-1V426 h-1V463 h-1V470 h-1V462 h-1V464 h-1V475 h-1V461 h-1V500 h-1V444 h-1V436 h-1V429 h-1V471 h-1V427 h-1V434 h-1V443 h-1V438 h-1V506 h-1V400 h-1V484 h-1V405 h-1V432 h-1V486 h-1V431 h-1V432 h-1V472 h-1V472 h-1V407 h-1V398 h-1V503 h-1V405 h-1V431 h-1V431 h-1V430 h-1V432 h-1V485 h-1V504 h-1V448 h-1V444 h-1V439 h-1V442 h-1V443 h-1V439 h-1V436 h-1V439 h-1V476 h-1V470 h-1V454 h-1V424 h-1V446 h-1V450 h-1V410 h-1V393 h-1V393 h-1V393 h-1V392 h-1Z" fill="#39c696"/>
<path d="M420 657V636 h1V641 h1V634 h1V638 h1V614 h1V556 h1V557 h1V561 h1V566 h1V566 h1V565 h1V565 h1V565 h1V566 h1V566 h1V559 h1V538 h1V568 h1V583 h1V588 h1V556 h1V530 h1V591 h1V582 h1V539 h1V540 h1V574 h1V600 h1V608 h1V573 h1V578 h1V550 h1V615 h1V583 h1V587 h1V531 h1V583 h1V581 h1V580 h1V571 h1V536 h1V566 h1V570 h1V577 h1V584 h1V582 h1V563 h1V532 h1V530 h1V550 h1V582 h1V544 h1V585 h1V579 h1V572 h1V580 h1V589 h1V580 h1V608 h1V576 h1V583 h1V571 h1V545 h1V608 h1V530 h1V548 h1V532 h1V579 h1V521 h1V579 h1V587 h1V585 h1V582 h1V552 h1V563 h1V573 h1V562 h1V600 h1V551 h1V553 h1V571 h1V579 h1V587 h1V586 h1V583 h1V606 h1V545 h1V596 h1V599 h1V608 h1V574 h1V578 h1V533 h1V584 h1V586 h1V570 h1V554 h1V552 h1V538 h1V536 h1V595 h1V604 h1V584 h1V607 h1V547 h1V578 h1V585 h1V576 h1V534 h1V570 h1V574 h1V570 h1V566 h1V568 h1V569 h1V565 h1V560 h1V558 h1V556 h1V559 h1V554 h1V562 h1V607 h1V575 h1V553 h1V587 h1V552 h1V592 h1V594 h1V563 h1V577 h1V589 h1V600 h1V613 h1V593 h1V591 h1V588 h1V555 h1V515 h1V514 h1V515 h1V515 h1V515 h1V521 h1V525 h1V515 h1V524 h1V515 h1V567 h1V515 h1V524 h1V514 h1V546 h1V515 h1V515 h1V515 h1V514 h1V518 h1V514 h1V514 h1V519 h1V516 h1V515 h1V516 h1V524 h1V523 h1V543 h1V518 h1V516 h1V515 h1V515 h1V515 h1V515 h1V514 h1V526 h1V515 h1V531 h1V519 h1V515 h1V515 h1V531 h1V518 h1V515 h1V515 h1V515 h1V517 h1V520 h1V514 h1V515 h1V515 h1V514 h1V526 h1V514 h1V514 h1V515 h1V515 h1V529 h1V516 h1V538 h1V515 h1V515 h1V515 h1V515 h1V518 h1V515 h1V518 h1V515 h1V515 h1V515 h1V515 h1V518 h1V550 h1V515 h1V546 h1V518 h1V527 h1V514 h1V515 h1V537 h1V514 h1V514 h1V516 h1V515 h1V517 h1V514 h1V521 h1V530 h1V516 h1V514 h1V532 h1V514 h1V516 h1V514 h1V514 h1V546 h1V534 h1V514 h1V515 h1V515 h1V515 h1V515 h1V515 h1V515 h1V515 h1V515 h1V534 h1V516 h1V515 h1V514 h1V515 h1V517 h1V518 h1V516 h1V515 h1V514 h1V517 h1V562 h1V515 h1V515 h1V515 h1V514 h1V533 h1V514 h1V580 h1V519 h1V515 h1V514 h1V514 h1V514 h1V531 h1V516 h1V518 h1V515 h1V515 h1V514 h1V549 h1V514 h1V516 h1V523 h1V541 h1V515 h1V516 h1V515 h1V522 h1V514 h1V517 h1V515 h1V515 h1V515 h1V515 h1V515 h1V517 h1V515 h1V517 h1V514 h1V520 h1V515 h1V515 h1V515 h1V515 h1V570 h1V516 h1V515 h1V517 h1V518 h1V516 h1V515 h1V515 h1V515 h1V530 h1V514 h1V514 h1V545 h1V515 h1V515 h1V516 h1V514 h1V515 h1V516 h1V515 h1V544 h1V514 h1V515 h1V514 h1V515 h1V515 h1V515 h1V515 h1V515 h1V519 h1V525 h1V515 h1V582 h1V519 h1V523 h1V517 h1V521 h1V514 h1V514 h1V532 h1V515 h1V514 h1V515 h1V515 h1V515 h1V514 h1V554 h1V514 h1V521 h1V526 h1V515 h1V515 h1V515 h1V551 h1V515 h1V514 h1V556 h1V515 h1V518 h1V515 h1V515 h1V555 h1V515 h1V518 h1V526 h1V526 h1V529 h1V532 h1V518 h1V519 h1V518 h1V540 h1V566 h1V519 h1V516 h1V531 h1V521 h1V555 h1V515 h1V514 h1V516 h1V515 h1V515 h1V515 h1V517 h1V515 h1V514 h1V515 h1V523 h1V514 h1V514 h1V516 h1V515 h1V518 h1V514 h1V515 h1V551 h1V515 h1V521 h1V514 h1V555 h1V515 h1V556 h1V515 h1V526 h1V515 h1V515 h1V515 h1V523 h1V515 h1V515 h1V514 h1V515 h1V515 h1V515 h1V528 h1V522 h1V516 h1V525 h1V542 h1V515 h1V515 h1V516 h1V515 h1V515 h1V515 h1V515 h1V515 h1V519 h1V514 h1V514 h1V515 h1V515 h1V515 h1V538 h1V514 h1V515 h1V519 h1V514 h1V516 h1V515 h1V514 h1V514 h1V514 h1V550 h1V523 h1V516 h1V522 h1V515 h1V515 h1V515 h1V515 h1V553 h1V515 h1V515 h1V515 h1V514 h1V515 h1V515 h1V515 h1V514 h1V536 h1V540 h1V533 h1V515 h1V515 h1V514 h1V515 h1V538 h1V517 h1V520 h1V515 h1V517 h1V523 h1V514 h1V515 h1V535 h1V524 h1V516 h1V525 h1V515 h1V551 h1V519 h1V547 h1V515 h1V516 h1V515 h1V515 h1V515 h1V515 h1V515 h1V515 h1V515 h1V515 h1V529 h1V515 h1V525 h1V539 h1V515 h1V522 h1V518 h1V516 h1V515 h1V515 h1V515 h1V519 h1V516 h1V515 h1V515 h1V522 h1V516 h1V516 h1V529 h1V522 h1V547 h1V514 h1V516 h1V515 h1V515 h1V515 h1V515 h1V544 h1V515 h1V516 h1V515 h1V514 h1V517 h1V515 h1V516 h1V514 h1V527 h1V553 h1V534 h1V536 h1V516 h1V519 h1V517 h1V514 h1V515 h1V520 h1V514 h1V515 h1V515 h1V514 h1V515 h1V514 h1V514 h1V514 h1V540 h1V543 h1V515 h1V528 h1V515 h1V515 h1V525 h1V514 h1V543 h1V517 h1V515 h1V528 h1V521 h1V514 h1V522 h1V521 h1V515 h1V515 h1V519 h1V514 h1V518 h1V551 h1V515 h1V527 h1V514 h1V515 h1V524 h1V514 h1V533 h1V518 h1V514 h1V544 h1V565 h1V515 h1V553 h1V540 h1V526 h1V545 h1V525 h1V514 h1V519 h1V519 h1V525 h1V515 h1V515 h1V514 h1V515 h1V515 h1V515 h1V515 h1V521 h1V528 h1V519 h1V519 h1V515 h1V514 h1V514 h1V515 h1V515 h1V515 h1V517 h1V517 h1V559 h1V516 h1V515 h1V515 h1V514 h1V515 h1V514 h1V515 h1V515 h1V555 h1V515 h1V547 h1V534 h1V543 h1V548 h1V545 h1V542 h1V549 h1V557 h1V542 h1V515 h1V575 h1V563 h1V580 h1V558 h1V566 h1V591 h1V578 h1V581 h1V578 h1V591 h1V576 h1V577 h1V582 h1V600 h1V583 h1V595 h1V539 h1V596 h1V598 h1V586 h1V585 h1V583 h1V603 h1V609 h1V607 h1V617 h1V629 h1V633 h1V614 h1V600 h1V597 h1V544 h1V524 h1V556 h1V547 h1V537 h1V530 h1V523 h1V515 h1V514 h1V515 h1V514 h1V515 h1V514 h1V530 h1V516 h1V515 h1V516 h1V515 h1V567 h1V514 h1V528 h1V515 h1V515 h1V515 h1V520 h1V531 h1V543 h1V514 h1V533 h1V517 h1V518 h1V514 h1V515 h1V515 h1V514 h1V578 h1V522 h1V546 h1V514 h1V514 h1V515 h1V516 h1V515 h1V515 h1V515 h1V517 h1V514 h1V515 h1V516 h1V517 h1V514 h1V515 h1V521 h1V522 h1V514 h1V515 h1V515 h1V515 h1V515 h1V516 h1V515 h1V516 h1V516 h1V515 h1V514 h1V515 h1V514 h1V514 h1V515 h1V515 h1V515 h1V515 h1V515 h1V545 h1V515 h1V515 h1V515 h1V514 h1V514 h1V519 h1V514 h1V514 h1V515 h1V525 h1V515 h1V523 h1V515 h1V515 h1V514 h1V515 h1V515 h1V515 h1V515 h1V514 h1V537 h1V515 h1V514 h1V518 h1V518 h1V516 h1V519 h1V519 h1V516 h1V515 h1V524 h1V515 h1V515 h1V514 h1V515 h1V519 h1V519 h1V515 h1V515 h1V515 h1V515 h1V515 h1V520 h1V514 h1V515 h1V517 h1V535 h1V517 h1V514 h1V514 h1V524 h1V515 h1V515 h1V519 h1V514 h1V529 h1V514 h1V516 h1V515 h1V516 h1V515 h1V514 h1V515 h1V514 h1V514 h1V515 h1V515 h1V515 h1V528 h1V515 h1V516 h1V520 h1V525 h1V514 h1V514 h1V516 h1V514 h1V522 h1V520 h1V518 h1V515 h1V515 h1V515 h1V515 h1V517 h1V550 h1V515 h1V514 h1V514 h1V515 h1V516 h1V516 h1V514 h1V539 h1V515 h1V514 h1V525 h1V515 h1V515 h1V531 h1V514 h1V563 h1V515 h1V515 h1V515 h1V526 h1V515 h1V552 h1V514 h1V514 h1V514 h1V514 h1V515 h1V540 h1V514 h1V515 h1V514 h1V514 h1V515 h1V515 h1V514 h1V516 h1V515 h1V514 h1V527 h1V516 h1V515 h1V515 h1V515 h1V514 h1V514 h1V516 h1V515 h1V514 h1V515 h1V519 h1V514 h1V576 h1V518 h1V521 h1V516 h1V515 h1V520 h1V521 h1V516 h1V551 h1V515 h1V514 h1V515 h1V515 h1V515 h1V515 h1V515 h1V515 h1V514 h1V515 h1V515 h1V545 h1V516 h1V514 h1V516 h1V515 h1V515 h1V571 h1V515 h1V537 h1V515 h1V515 h1V519 h1V514 h1V514 h1V517 h1V516 h1V515 h1V515 h1V517 h1V514 h1V515 h1V514 h1V515 h1V531 h1V515 h1V528 h1V514 h1V514 h1V559 h1V516 h1V518 h1V514 h1V548 h1V521 h1V515 h1V516 h1V514 h1V547 h1V515 h1V515 h1V536 h1V515 h1V520 h1V537 h1V514 h1V516 h1V515 h1V515 h1V514 h1V515 h1V516 h1V515 h1V533 h1V524 h1V514 h1V515 h1V515 h1V515 h1V521 h1V515 h1V515 h1V515 h1V515 h1V514 h1V514 h1V514 h1V536 h1V529 h1V533 h1V533 h1V515 h1V515 h1V516 h1V517 h1V518 h1V530 h1V572 h1V543 h1V556 h1V586 h1V586 h1V586 h1V575 h1V584 h1V583 h1V586 h1V603 h1V619 h1V622 h1V609 h1V626 h1V625 h1V634 h1V640 h1V638 h1V641 h1V647 h1V646 h1V648 h1V650 h1V651 h1V650 h1V653 h1V652 h1V653 h1V653 h1V655 h1V655 h1V655 h1V655 h1V656 h1V656 h1V656 h1V656 h1V656 h1V656 h1V657 h1V657 h1V657 h1V657 h1V657 h1V657 h1V657 h1V657 h1V657 h1V657 h1V657 h1V657 h1V657 h1V657 h1V657 h1V657 h1V657 h1V657 h1V657 h1V657V658V658 h-1V658 h-1V658 h-1V658 h-1V658 h-1V658 h-1V658 h-1V658 h-1V658 h-1V658 h-1V658 h-1V658 h-1V658 h-1V658 h-1V658 h-1V658 h-1V658 h-1V658 h-1V658 h-1V658 h-1V659 h-1V659 h-1V659 h-1V659 h-1V659 h-1V660 h-1V660 h-1V660 h-1V661 h-1V662 h-1V661 h-1V663 h-1V663 h-1V663 h-1V666 h-1V666 h-1V666 h-1V670 h-1V669 h-1V675 h-1V672 h-1V676 h-1V685 h-1V690 h-1V698 h-1V690 h-1V699 h-1V700 h-1V725 h-1V739 h-1V742 h-1V740 h-1V728 h-1V728 h-1V728 h-1V728 h-1V769 h-1V770 h-1V754 h-1V782 h-1V794 h-1V795 h-1V796 h-1V797 h-1V797 h-1V798 h-1V798 h-1V798 h-1V798 h-1V798 h-1V798 h-1V766 h-1V798 h-1V797 h-1V797 h-1V797 h-1V798 h-1V798 h-1V798 h-1V753 h-1V798 h-1V794 h-1V798 h-1V797 h-1V788 h-1V797 h-1V799 h-1V797 h-1V798 h-1V797 h-1V797 h-1V799 h-1V797 h-1V798 h-1V797 h-1V797 h-1V769 h-1V792 h-1V797 h-1V798 h-1V798 h-1V783 h-1V798 h-1V762 h-1V773 h-1V795 h-1V798 h-1V786 h-1V736 h-1V748 h-1V783 h-1V758 h-1V798 h-1V798 h-1V784 h-1V773 h-1V797 h-1V797 h-1V797 h-1V798 h-1V789 h-1V799 h-1V798 h-1V798 h-1V787 h-1V797 h-1V797 h-1V789 h-1V797 h-1V798 h-1V798 h-1V798 h-1V797 h-1V798 h-1V793 h-1V791 h-1V795 h-1V799 h-1V798 h-1V798 h-1V798 h-1V785 h-1V783 h-1V798 h-1V797 h-1V798 h-1V798 h-1V798 h-1V797 h-1V787 h-1V798 h-1V797 h-1V798 h-1V797 h-1V797 h-1V791 h-1V783 h-1V798 h-1V798 h-1V798 h-1V797 h-1V798 h-1V795 h-1V799 h-1V797 h-1V798 h-1V774 h-1V795 h-1V798 h-1V781 h-1V797 h-1V798 h-1V797 h-1V795 h-1V794 h-1V797 h-1V798 h-1V770 h-1V797 h-1V736 h-1V769 h-1V797 h-1V798 h-1V797 h-1V797 h-1V794 h-1V792 h-1V798 h-1V764 h-1V797 h-1V798 h-1V797 h-1V799 h-1V787 h-1V792 h-1V798 h-1V798 h-1V782 h-1V764 h-1V798 h-1V798 h-1V798 h-1V797 h-1V798 h-1V798 h-1V794 h-1V769 h-1V798 h-1V798 h-1V798 h-1V798 h-1V796 h-1V796 h-1V798 h-1V798 h-1V798 h-1V798 h-1V797 h-1V798 h-1V797 h-1V798 h-1V798 h-1V781 h-1V797 h-1V787 h-1V798 h-1V757 h-1V765 h-1V797 h-1V797 h-1V766 h-1V793 h-1V797 h-1V798 h-1V797 h-1V799 h-1V798 h-1V795 h-1V798 h-1V797 h-1V791 h-1V797 h-1V798 h-1V797 h-1V798 h-1V798 h-1V797 h-1V797 h-1V798 h-1V780 h-1V798 h-1V798 h-1V792 h-1V797 h-1V798 h-1V795 h-1V797 h-1V797 h-1V798 h-1V797 h-1V782 h-1V782 h-1V797 h-1V795 h-1V798 h-1V798 h-1V795 h-1V790 h-1V798 h-1V798 h-1V793 h-1V798 h-1V798 h-1V798 h-1V797 h-1V798 h-1V798 h-1V797 h-1V798 h-1V767 h-1V798 h-1V798 h-1V798 h-1V796 h-1V796 h-1V782 h-1V796 h-1V798 h-1V771 h-1V783 h-1V798 h-1V798 h-1V798 h-1V797 h-1V798 h-1V798 h-1V797 h-1V795 h-1V790 h-1V775 h-1V799 h-1V797 h-1V797 h-1V798 h-1V797 h-1V798 h-1V798 h-1V769 h-1V797 h-1V798 h-1V798 h-1V797 h-1V775 h-1V796 h-1V799 h-1V798 h-1V798 h-1V757 h-1V797 h-1V797 h-1V798 h-1V797 h-1V797 h-1V773 h-1V798 h-1V765 h-1V794 h-1V745 h-1V786 h-1V798 h-1V797 h-1V794 h-1V758 h-1V797 h-1V797 h-1V793 h-1V785 h-1V798 h-1V796 h-1V798 h-1V798 h-1V799 h-1V798 h-1V798 h-1V795 h-1V784 h-1V798 h-1V797 h-1V797 h-1V797 h-1V797 h-1V797 h-1V797 h-1V790 h-1V798 h-1V798 h-1V797 h-1V795 h-1V798 h-1V777 h-1V775 h-1V772 h-1V768 h-1V741 h-1V758 h-1V777 h-1V734 h-1V716 h-1V700 h-1V680 h-1V685 h-1V689 h-1V693 h-1V771 h-1V703 h-1V722 h-1V727 h-1V732 h-1V730 h-1V780 h-1V726 h-1V710 h-1V727 h-1V796 h-1V715 h-1V715 h-1V731 h-1V733 h-1V738 h-1V742 h-1V739 h-1V736 h-1V784 h-1V785 h-1V728 h-1V750 h-1V765 h-1V736 h-1V760 h-1V744 h-1V748 h-1V776 h-1V756 h-1V788 h-1V786 h-1V790 h-1V770 h-1V794 h-1V797 h-1V792 h-1V794 h-1V774 h-1V797 h-1V798 h-1V798 h-1V798 h-1V767 h-1V779 h-1V798 h-1V778 h-1V797 h-1V798 h-1V774 h-1V798 h-1V798 h-1V798 h-1V798 h-1V792 h-1V798 h-1V780 h-1V799 h-1V796 h-1V795 h-1V797 h-1V798 h-1V797 h-1V777 h-1V797 h-1V799 h-1V798 h-1V785 h-1V781 h-1V796 h-1V798 h-1V798 h-1V798 h-1V794 h-1V798 h-1V794 h-1V793 h-1V781 h-1V798 h-1V797 h-1V798 h-1V798 h-1V797 h-1V798 h-1V797 h-1V779 h-1V798 h-1V798 h-1V797 h-1V797 h-1V797 h-1V798 h-1V798 h-1V798 h-1V798 h-1V794 h-1V795 h-1V797 h-1V797 h-1V798 h-1V798 h-1V789 h-1V797 h-1V797 h-1V798 h-1V797 h-1V761 h-1V784 h-1V774 h-1V798 h-1V798 h-1V798 h-1V795 h-1V798 h-1V797 h-1V798 h-1V798 h-1V798 h-1V798 h-1V774 h-1V798 h-1V796 h-1V766 h-1V778 h-1V798 h-1V798 h-1V797 h-1V780 h-1V784 h-1V797 h-1V791 h-1V798 h-1V780 h-1V794 h-1V796 h-1V799 h-1V773 h-1V798 h-1V776 h-1V798 h-1V785 h-1V797 h-1V797 h-1V798 h-1V776 h-1V798 h-1V796 h-1V793 h-1V797 h-1V797 h-1V798 h-1V797 h-1V798 h-1V798 h-1V798 h-1V777 h-1V798 h-1V798 h-1V797 h-1V798 h-1V797 h-1V798 h-1V799 h-1V798 h-1V748 h-1V797 h-1V750 h-1V798 h-1V791 h-1V774 h-1V797 h-1V797 h-1V797 h-1V778 h-1V798 h-1V798 h-1V798 h-1V795 h-1V798 h-1V787 h-1V797 h-1V798 h-1V797 h-1V798 h-1V798 h-1V798 h-1V768 h-1V797 h-1V779 h-1V752 h-1V794 h-1V756 h-1V797 h-1V798 h-1V793 h-1V797 h-1V783 h-1V796 h-1V798 h-1V798 h-1V798 h-1V798 h-1V797 h-1V794 h-1V798 h-1V798 h-1V798 h-1V764 h-1V798 h-1V798 h-1V798 h-1V797 h-1V794 h-1V798 h-1V796 h-1V798 h-1V798 h-1V797 h-1V797 h-1V797 h-1V792 h-1V798 h-1V797 h-1V798 h-1V798 h-1V769 h-1V797 h-1V794 h-1V798 h-1V795 h-1V798 h-1V798 h-1V798 h-1V797 h-1V798 h-1V797 h-1V795 h-1V796 h-1V798 h-1V797 h-1V756 h-1V798 h-1V798 h-1V787 h-1V798 h-1V744 h-1V797 h-1V766 h-1V797 h-1V793 h-1V797 h-1V798 h-1V792 h-1V794 h-1V798 h-1V782 h-1V798 h-1V798 h-1V797 h-1V798 h-1V793 h-1V798 h-1V796 h-1V797 h-1V797 h-1V797 h-1V798 h-1V798 h-1V798 h-1V797 h-1V798 h-1V799 h-1V797 h-1V798 h-1V797 h-1V775 h-1V762 h-1V797 h-1V798 h-1V797 h-1V797 h-1V792 h-1V779 h-1V794 h-1V798 h-1V798 h-1V798 h-1V797 h-1V798 h-1V796 h-1V797 h-1V795 h-1V797 h-1V773 h-1V797 h-1V798 h-1V797 h-1V798 h-1V797 h-1V796 h-1V796 h-1V798 h-1V749 h-1V788 h-1V798 h-1V796 h-1V798 h-1V798 h-1V797 h-1V798 h-1V799 h-1V794 h-1V798 h-1V798 h-1V797 h-1V799 h-1V779 h-1V798 h-1V798 h-1V798 h-1V798 h-1V798 h-1V795 h-1V762 h-1V798 h-1V784 h-1V798 h-1V794 h-1V797 h-1V783 h-1V798 h-1V798 h-1V794 h-1V775 h-1V794 h-1V770 h-1V797 h-1V794 h-1V784 h-1V797 h-1V785 h-1V797 h-1V796 h-1V797 h-1V797 h-1V796 h-1V776 h-1V791 h-1V798 h-1V794 h-1V797 h-1V798 h-1V797 h-1V798 h-1V797 h-1V798 h-1V798 h-1V798 h-1V744 h-1V797 h-1V798 h-1V750 h-1V798 h-1V798 h-1V797 h-1V797 h-1V797 h-1V798 h-1V797 h-1V797 h-1V798 h-1V798 h-1V756 h-1V799 h-1V798 h-1V797 h-1V794 h-1V798 h-1V797 h-1V759 h-1V797 h-1V798 h-1V797 h-1V798 h-1V798 h-1V798 h-1V772 h-1V793 h-1V798 h-1V798 h-1V798 h-1V798 h-1V751 h-1V796 h-1V798 h-1V797 h-1V798 h-1V798 h-1V793 h-1V798 h-1V798 h-1V795 h-1V798 h-1V798 h-1V795 h-1V796 h-1V770 h-1V757 h-1V798 h-1V798 h-1V798 h-1V779 h-1V787 h-1V785 h-1V789 h-1V797 h-1V755 h-1V798 h-1V798 h-1V794 h-1V798 h-1V775 h-1V794 h-1V799 h-1V797 h-1V790 h-1V798 h-1V797 h-1V798 h-1V797 h-1V798 h-1V797 h-1V798 h-1V794 h-1V763 h-1V798 h-1V797 h-1V798 h-1V797 h-1V787 h-1V798 h-1V796 h-1V774 h-1V798 h-1V798 h-1V798 h-1V798 h-1V778 h-1V798 h-1V753 h-1V798 h-1V796 h-1V797 h-1V798 h-1V798 h-1V798 h-1V778 h-1V778 h-1V797 h-1V798 h-1V798 h-1V798 h-1V788 h-1V797 h-1V798 h-1V770 h-1V797 h-1V754 h-1V797 h-1V798 h-1V782 h-1V796 h-1V798 h-1V798 h-1V790 h-1V797 h-1V797 h-1V796 h-1V797 h-1V781 h-1V798 h-1V798 h-1V781 h-1V797 h-1V795 h-1V797 h-1V798 h-1V798 h-1V794 h-1V788 h-1V797 h-1V794 h-1V792 h-1V798 h-1V794 h-1V799 h-1V774 h-1V798 h-1V798 h-1V798 h-1V798 h-1V798 h-1V798 h-1V798 h-1V777 h-1V797 h-1V798 h-1V798 h-1V797 h-1V797 h-1V775 h-1V798 h-1V776 h-1V798 h-1V798 h-1V795 h-1V794 h-1V726 h-1V760 h-1V734 h-1V734 h-1V696 h-1V733 h-1V739 h-1V769 h-1V749 h-1V750 h-1V742 h-1V732 h-1V798 h-1V735 h-1V705 h-1V741 h-1V749 h-1V721 h-1V767 h-1V757 h-1V772 h-1V762 h-1V737 h-1V796 h-1V704 h-1V740 h-1V742 h-1V744 h-1V740 h-1V694 h-1V727 h-1V778 h-1V726 h-1V797 h-1V742 h-1V793 h-1V768 h-1V750 h-1V724 h-1V792 h-1V720 h-1V748 h-1V752 h-1V755 h-1V753 h-1V751 h-1V795 h-1V780 h-1V753 h-1V758 h-1V748 h-1V706 h-1V731 h-1V787 h-1V772 h-1V759 h-1V758 h-1V745 h-1V753 h-1V761 h-1V760 h-1V766 h-1V792 h-1V741 h-1V743 h-1V744 h-1V777 h-1V760 h-1V729 h-1V750 h-1V750 h-1V720 h-1V745 h-1V740 h-1V749 h-1V714 h-1V750 h-1V740 h-1V741 h-1V743 h-1V758 h-1V790 h-1V704 h-1V777 h-1V729 h-1V768 h-1V744 h-1V784 h-1V754 h-1V719 h-1V743 h-1V759 h-1V765 h-1V773 h-1V717 h-1V715 h-1V723 h-1V777 h-1V739 h-1V703 h-1V739 h-1V733 h-1V732 h-1V757 h-1V728 h-1V726 h-1V730 h-1V734 h-1V787 h-1V732 h-1V728 h-1V726 h-1V734 h-1V742 h-1V748 h-1V764 h-1V764 h-1V714 h-1V750 h-1V733 h-1V724 h-1V716 h-1V715 h-1V716 h-1V717 h-1V719 h-1V734 h-1V749 h-1V749 h-1V774 h-1V758 h-1V752 h-1V745 h-1V700 h-1V678 h-1V679 h-1V674 h-1V683 h-1Z" fill="#39c696"/>
<rect x="419" y="265" width="1030" height="1" fill="rgba(235,255,245,0.035)"/>
<rect x="419" y="469" width="1030" height="1" fill="rgba(235,255,245,0.035)"/>
<rect x="419" y="295" width="1030" height="1" fill="rgba(235,255,245,0.035)"/>
<rect x="419" y="440" width="1030" height="1" fill="rgba(235,255,245,0.035)"/>
<rect x="419" y="316" width="1030" height="1" fill="rgba(235,255,245,0.035)"/>
<rect x="419" y="419" width="1030" height="1" fill="rgba(235,255,245,0.035)"/>
<rect x="419" y="349" width="1030" height="1" fill="rgba(235,255,245,0.035)"/>
<rect x="419" y="386" width="1030" height="1" fill="rgba(235,255,245,0.035)"/>
<rect x="419" y="366" width="1011" height="1" fill="rgba(200,245,215,0.30)"/>
<rect x="1430" y="365" width="19" height="3" fill="#5a1e10"/>
<rect x="1430" y="366" width="19" height="1" fill="#e58a68"/>
<rect x="419" y="555" width="1030" height="1" fill="rgba(235,255,245,0.035)"/>
<rect x="419" y="759" width="1030" height="1" fill="rgba(235,255,245,0.035)"/>
<rect x="419" y="585" width="1030" height="1" fill="rgba(235,255,245,0.035)"/>
<rect x="419" y="730" width="1030" height="1" fill="rgba(235,255,245,0.035)"/>
<rect x="419" y="606" width="1030" height="1" fill="rgba(235,255,245,0.035)"/>
<rect x="419" y="709" width="1030" height="1" fill="rgba(235,255,245,0.035)"/>
<rect x="419" y="639" width="1030" height="1" fill="rgba(235,255,245,0.035)"/>
<rect x="419" y="676" width="1030" height="1" fill="rgba(235,255,245,0.035)"/>
<rect x="419" y="656" width="1011" height="1" fill="rgba(200,245,215,0.30)"/>
<rect x="1430" y="655" width="19" height="3" fill="#5a1e10"/>
<rect x="1430" y="656" width="19" height="1" fill="#e58a68"/>
<rect x="527" y="223" width="1" height="579" fill="rgba(235,255,245,0.035)"/>
<rect x="636" y="223" width="1" height="579" fill="rgba(235,255,245,0.035)"/>
<rect x="746" y="223" width="1" height="579" fill="rgba(235,255,245,0.035)"/>
<rect x="855" y="223" width="1" height="579" fill="rgba(235,255,245,0.035)"/>
<rect x="965" y="223" width="1" height="579" fill="rgba(235,255,245,0.035)"/>
<rect x="1075" y="223" width="1" height="579" fill="rgba(235,255,245,0.035)"/>
<rect x="1184" y="223" width="1" height="579" fill="rgba(235,255,245,0.035)"/>
<rect x="1294" y="223" width="1" height="579" fill="rgba(235,255,245,0.035)"/>
<rect x="1403" y="223" width="1" height="579" fill="rgba(235,255,245,0.035)"/>
</svg>

<!-- channel divider -->
<div class="a" style="left:419px;top:511px;width:1030px;height:2px;background:#8a9585"></div>
<div class="a" style="left:419px;top:510px;width:1030px;height:1px;background:#10240f"></div>
<div class="a" style="left:419px;top:513px;width:1030px;height:1px;background:#10240f"></div>
<!-- playhead -->
<div class="a" style="left:417px;top:222px;width:3px;height:582px;background:linear-gradient(to right,#3a1408 0,#652d1e 40%,#652d1e 75%,#2a0d04 100%)"></div>
<svg style="left:411px;top:206px" width="16" height="16" viewBox="0 0 16 16"><path d="M1 0.5H15V8L8 15.5L1 8Z" fill="#2f8bea"/></svg>
<!-- fade handles -->
<svg style="left:433px;top:225px" width="16" height="16" viewBox="0 0 16 16"><rect x="0.75" y="0.75" width="14.5" height="14.5" fill="#2e2e2e" stroke="#9a9a9a" stroke-width="1.5"/><path d="M1.5 1.5H14.5L1.5 14.5Z" fill="#b4b4b4"/></svg>
<svg style="left:1418px;top:225px" width="16" height="16" viewBox="0 0 16 16"><rect x="0.75" y="0.75" width="14.5" height="14.5" fill="#2e2e2e" stroke="#9a9a9a" stroke-width="1.5"/><path d="M1.5 1.5H14.5V14.5Z" fill="#b4b4b4"/></svg>
<!-- amplitude HUD -->
<div class="a" style="left:855px;top:251px;width:157px;height:33px;background:rgba(44,44,44,0.82)"></div>
<div class="a" style="left:855px;top:251px;width:12px;height:33px;background:rgba(150,150,150,0.35)"></div>
<div class="a" style="left:859px;top:261px;width:4px;height:13px;background:repeating-linear-gradient(to bottom,#c8c8c8 0,#c8c8c8 1.2px,transparent 1.2px,transparent 4px)"></div>
<svg style="left:868px;top:256px" width="21" height="20" viewBox="0 0 21 20">
 <path d="M1 16V19M3.6 15V19M6.2 13.5V19M8.8 12V19M11.4 10V19M14 8V19M16.6 5V19M19.4 1V19" stroke="#8a9590" stroke-width="1.5"/>
</svg>
<svg style="left:894px;top:255px" width="24" height="24" viewBox="0 0 24 24"><circle cx="12" cy="12" r="10.6" fill="none" stroke="#8f9894" stroke-width="2"/><path d="M12 1.5V12" stroke="#8f9894" stroke-width="2"/></svg>
<div class="t" style="left:922px;top:257px;font-size:14px;color:#3b8eea">+0</div>
<div class="t" style="left:942px;top:257px;font-size:14px;color:#8f9894">dB</div>
<div class="a" style="left:987px;top:255px;width:2px;height:25px;background:#55635d"></div>
<svg style="left:0;top:0" width="1556" height="866" viewBox="0 0 1556 866"><g transform="translate(999.6 268.6) rotate(-42)" fill="#c2c8c5"><rect x="1" y="-2.1" width="5.8" height="4.2" rx="2"/><rect x="-0.2" y="-3.8" width="2" height="7.6" rx="0.6"/><rect x="-6" y="-0.8" width="6" height="1.6" rx="0.6"/></g></svg>
<!-- dB scale -->
<div class="a" style="left:1449px;top:223px;width:91px;height:288px;background:#232323"></div>
<div class="a" style="left:1449px;top:514px;width:91px;height:288px;background:#232323"></div>
<div class="a" style="left:1449px;top:223.0px;width:7px;height:1.5px;background:#bdbdbd"></div>
<div class="a" style="left:1449px;top:510.0px;width:7px;height:1.5px;background:#bdbdbd"></div>
<div class="a" style="left:1459px;top:505px;width:20px;height:6px;overflow:hidden"><div class="t db" style="left:0;top:-5.5px">0</div></div>
<div class="a" style="left:1449px;top:238.5px;width:4px;height:1.5px;background:#bdbdbd"></div>
<div class="a" style="left:1449px;top:495.0px;width:4px;height:1.5px;background:#bdbdbd"></div>
<div class="a" style="left:1449px;top:252.5px;width:4px;height:1.5px;background:#bdbdbd"></div>
<div class="a" style="left:1449px;top:481.0px;width:4px;height:1.5px;background:#bdbdbd"></div>
<div class="a" style="left:1449px;top:264.5px;width:7px;height:1.5px;background:#bdbdbd"></div>
<div class="t db" style="left:1459px;top:253.4px">-3</div>
<div class="a" style="left:1449px;top:469.0px;width:7px;height:1.5px;background:#bdbdbd"></div>
<div class="t db" style="left:1459px;top:457.6px">-3</div>
<div class="a" style="left:1449px;top:275.5px;width:4px;height:1.5px;background:#bdbdbd"></div>
<div class="a" style="left:1449px;top:458.0px;width:4px;height:1.5px;background:#bdbdbd"></div>
<div class="a" style="left:1449px;top:285.5px;width:4px;height:1.5px;background:#bdbdbd"></div>
<div class="a" style="left:1449px;top:448.0px;width:4px;height:1.5px;background:#bdbdbd"></div>
<div class="a" style="left:1449px;top:294.5px;width:7px;height:1.5px;background:#bdbdbd"></div>
<div class="t db" style="left:1459px;top:283.1px">-6</div>
<div class="a" style="left:1449px;top:439.0px;width:7px;height:1.5px;background:#bdbdbd"></div>
<div class="t db" style="left:1459px;top:427.9px">-6</div>
<div class="a" style="left:1449px;top:302.0px;width:4px;height:1.5px;background:#bdbdbd"></div>
<div class="a" style="left:1449px;top:431.5px;width:4px;height:1.5px;background:#bdbdbd"></div>
<div class="a" style="left:1449px;top:309.0px;width:4px;height:1.5px;background:#bdbdbd"></div>
<div class="a" style="left:1449px;top:424.5px;width:4px;height:1.5px;background:#bdbdbd"></div>
<div class="a" style="left:1449px;top:315.5px;width:7px;height:1.5px;background:#bdbdbd"></div>
<div class="t db" style="left:1459px;top:304.1px">-9</div>
<div class="a" style="left:1449px;top:418.0px;width:7px;height:1.5px;background:#bdbdbd"></div>
<div class="t db" style="left:1459px;top:406.9px">-9</div>
<div class="a" style="left:1449px;top:330.0px;width:4px;height:1.5px;background:#bdbdbd"></div>
<div class="a" style="left:1449px;top:403.5px;width:4px;height:1.5px;background:#bdbdbd"></div>
<div class="a" style="left:1449px;top:340.5px;width:4px;height:1.5px;background:#bdbdbd"></div>
<div class="a" style="left:1449px;top:393.0px;width:4px;height:1.5px;background:#bdbdbd"></div>
<div class="a" style="left:1449px;top:348.0px;width:7px;height:1.5px;background:#bdbdbd"></div>
<div class="t db" style="left:1459px;top:336.9px">-18</div>
<div class="a" style="left:1449px;top:385.5px;width:7px;height:1.5px;background:#bdbdbd"></div>
<div class="t db" style="left:1459px;top:374.1px">-18</div>
<div class="a" style="left:1449px;top:366.2px;width:7px;height:1.5px;background:#bdbdbd"></div>
<div class="t db" style="left:1459px;top:355.0px">- ∞</div>
<div class="t db" style="left:1459px;top:220.5px">dB</div>
<div class="a" style="left:1449px;top:513.0px;width:7px;height:1.5px;background:#bdbdbd"></div>
<div class="a" style="left:1449px;top:801.0px;width:7px;height:1.5px;background:#bdbdbd"></div>
<div class="a" style="left:1459px;top:796px;width:20px;height:6px;overflow:hidden"><div class="t db" style="left:0;top:-5.5px">0</div></div>
<div class="a" style="left:1449px;top:528.5px;width:4px;height:1.5px;background:#bdbdbd"></div>
<div class="a" style="left:1449px;top:785.0px;width:4px;height:1.5px;background:#bdbdbd"></div>
<div class="a" style="left:1449px;top:542.5px;width:4px;height:1.5px;background:#bdbdbd"></div>
<div class="a" style="left:1449px;top:771.0px;width:4px;height:1.5px;background:#bdbdbd"></div>
<div class="a" style="left:1449px;top:554.5px;width:7px;height:1.5px;background:#bdbdbd"></div>
<div class="t db" style="left:1459px;top:543.4px">-3</div>
<div class="a" style="left:1449px;top:759.0px;width:7px;height:1.5px;background:#bdbdbd"></div>
<div class="t db" style="left:1459px;top:747.6px">-3</div>
<div class="a" style="left:1449px;top:565.5px;width:4px;height:1.5px;background:#bdbdbd"></div>
<div class="a" style="left:1449px;top:748.0px;width:4px;height:1.5px;background:#bdbdbd"></div>
<div class="a" style="left:1449px;top:575.5px;width:4px;height:1.5px;background:#bdbdbd"></div>
<div class="a" style="left:1449px;top:738.0px;width:4px;height:1.5px;background:#bdbdbd"></div>
<div class="a" style="left:1449px;top:584.5px;width:7px;height:1.5px;background:#bdbdbd"></div>
<div class="t db" style="left:1459px;top:573.1px">-6</div>
<div class="a" style="left:1449px;top:729.0px;width:7px;height:1.5px;background:#bdbdbd"></div>
<div class="t db" style="left:1459px;top:717.9px">-6</div>
<div class="a" style="left:1449px;top:592.0px;width:4px;height:1.5px;background:#bdbdbd"></div>
<div class="a" style="left:1449px;top:721.5px;width:4px;height:1.5px;background:#bdbdbd"></div>
<div class="a" style="left:1449px;top:599.0px;width:4px;height:1.5px;background:#bdbdbd"></div>
<div class="a" style="left:1449px;top:714.5px;width:4px;height:1.5px;background:#bdbdbd"></div>
<div class="a" style="left:1449px;top:605.5px;width:7px;height:1.5px;background:#bdbdbd"></div>
<div class="t db" style="left:1459px;top:594.1px">-9</div>
<div class="a" style="left:1449px;top:708.0px;width:7px;height:1.5px;background:#bdbdbd"></div>
<div class="t db" style="left:1459px;top:696.9px">-9</div>
<div class="a" style="left:1449px;top:620.0px;width:4px;height:1.5px;background:#bdbdbd"></div>
<div class="a" style="left:1449px;top:693.5px;width:4px;height:1.5px;background:#bdbdbd"></div>
<div class="a" style="left:1449px;top:630.5px;width:4px;height:1.5px;background:#bdbdbd"></div>
<div class="a" style="left:1449px;top:683.0px;width:4px;height:1.5px;background:#bdbdbd"></div>
<div class="a" style="left:1449px;top:638.0px;width:7px;height:1.5px;background:#bdbdbd"></div>
<div class="t db" style="left:1459px;top:626.9px">-18</div>
<div class="a" style="left:1449px;top:675.5px;width:7px;height:1.5px;background:#bdbdbd"></div>
<div class="t db" style="left:1459px;top:664.1px">-18</div>
<div class="a" style="left:1449px;top:656.2px;width:7px;height:1.5px;background:#bdbdbd"></div>
<div class="t db" style="left:1459px;top:645.0px">- ∞</div>
<div class="t db" style="left:1459px;top:511.5px">dB</div>
<div class="a" style="left:1511px;top:357px;width:26px;height:22px;background:#171717;border:1px solid #303030;border-radius:3px"></div>
<div class="t blue" style="left:1511px;top:358px;width:26px;text-align:center;font-size:12.5px">L</div>
<div class="a" style="left:1511px;top:647px;width:26px;height:22px;background:#171717;border:1px solid #303030;border-radius:3px"></div>
<div class="t blue" style="left:1511px;top:648px;width:26px;text-align:center;font-size:12.5px">R</div>
<!-- horizontal scrollbar strip -->
<div class="a" style="left:417px;top:804px;width:1124px;height:12px;background:#333"></div>
<div class="a" style="left:417px;top:816px;width:1125px;height:1px;background:#151515"></div>
<div class="a" style="left:1540px;top:222px;width:2px;height:595px;background:#080808"></div>
<div class="a" style="left:963px;top:807px;width:30px;height:5px;background-image:radial-gradient(circle,#6b6b6b 0.8px,transparent 1.1px);background-size:3px 2.5px"></div>
<svg style="left:1511px;top:807px" width="9" height="5" viewBox="0 0 9 5"><path d="M4.5 0L9 5H0Z" fill="#9a9a9a"/></svg>
<!-- time display -->
<div class="t blue" id="time" style="left:421px;top:830px;font-size:20px;line-height:24px;height:24px;letter-spacing:-0.05px">0:00.000</div>
<!-- transport -->
<div class="a" style="left:712px;top:833px;width:11px;height:11px;background:#505050"></div>
<svg style="left:748px;top:832px" width="13" height="13" viewBox="0 0 13 13"><path d="M0.6 0.3L12.4 6.3L0.6 12.3Z" fill="#c4c4c4"/></svg>
<div class="a" style="left:787px;top:833px;width:4px;height:11px;background:#505050"></div>
<div class="a" style="left:793px;top:833px;width:4px;height:11px;background:#505050"></div>
<svg style="left:821px;top:833px" width="15" height="12" viewBox="0 0 15 12"><rect x="0" y="0.3" width="2.6" height="11.4" fill="#c4c4c4"/><path d="M14.2 0.3V11.7L3.8 6Z" fill="#c4c4c4"/></svg>
<svg style="left:857px;top:834px" width="20" height="10" viewBox="0 0 20 10"><path d="M9.6 0.2V9.8L0.2 5ZM19.4 0.2V9.8L10 5Z" fill="#c4c4c4"/></svg>
<svg style="left:893px;top:834px" width="20" height="10" viewBox="0 0 20 10"><path d="M0.4 0.2V9.8L9.8 5ZM10.2 0.2V9.8L19.6 5Z" fill="#c4c4c4"/></svg>
<svg style="left:933px;top:833px" width="15" height="12" viewBox="0 0 15 12"><rect x="12.2" y="0.3" width="2.6" height="11.4" fill="#c4c4c4"/><path d="M0.6 0.3V11.7L11 6Z" fill="#c4c4c4"/></svg>
<div class="a" style="left:970.6px;top:832.6px;width:12.8px;height:12.8px;border-radius:6.4px;background:#f8463a"></div>
<svg style="left:1005px;top:831px" width="19" height="15" viewBox="0 0 19 15"><path d="M0.2 14.2V3.4H7.3V0.2L15.1 4.5L7.3 8.7V6.3H3V11.5H15.3V6.9H17.9V14.2Z" fill="#c4c4c4"/></svg>
<svg style="left:0;top:0" width="1556" height="866" viewBox="0 0 1556 866">
 <path d="M1041 838.4H1043.6C1046.6 838.4 1046.6 836 1046.6 834.2V831.5M1043.6 838.4C1046.6 838.4 1046.6 840.8 1046.6 842.6V845.3" fill="none" stroke="#c4c4c4" stroke-width="2.1"/>
 <path d="M1050.6 831.5V834.2C1050.6 836 1050.6 838.4 1053.6 838.4H1056.5M1050.6 845.3V842.6C1050.6 840.8 1050.6 838.4 1053.6 838.4" fill="none" stroke="#c4c4c4" stroke-width="2.1"/>
 <path d="M1055.4 833.8L1061.6 838.4L1055.4 843Z" fill="#c4c4c4"/>
</svg>
<svg style="left:0;top:0" width="1556" height="866" viewBox="0 0 1556 866">
<path d="M1211.3 831.0V846.8" stroke="#c4c4c4" stroke-width="1.5"/><path d="M1211.3 829.0L1214.1 833.2H1208.5ZM1211.3 848.8L1214.1 844.6H1208.5Z" fill="#c4c4c4"/><circle cx="1220.2" cy="839.1" r="5" fill="none" stroke="#c4c4c4" stroke-width="1.6"/><path d="M1224.0 842.9L1228.5 846.9" stroke="#c4c4c4" stroke-width="2.4"/><path d="M1217.4 839.1H1223.0" stroke="#c4c4c4" stroke-width="1.3"/><path d="M1220.2 836.3V841.9" stroke="#c4c4c4" stroke-width="1.3"/>
<path d="M1248.4 831.0V846.8" stroke="#c4c4c4" stroke-width="1.5"/><path d="M1248.4 829.0L1251.2 833.2H1245.6ZM1248.4 848.8L1251.2 844.6H1245.6Z" fill="#c4c4c4"/><circle cx="1257.3" cy="839.1" r="5" fill="none" stroke="#c4c4c4" stroke-width="1.6"/><path d="M1261.1 842.9L1265.6 846.9" stroke="#c4c4c4" stroke-width="2.4"/><path d="M1254.5 839.1H1260.1" stroke="#c4c4c4" stroke-width="1.3"/>
<path d="M1284.0 831.0H1302.0" stroke="#c4c4c4" stroke-width="1.5"/><path d="M1282.0 831.0L1286.2 828.2V833.8ZM1304.0 831.0L1299.8 828.2V833.8Z" fill="#c4c4c4"/><circle cx="1293.1" cy="840.0" r="5" fill="none" stroke="#c4c4c4" stroke-width="1.6"/><path d="M1296.9 843.8L1301.4 847.8" stroke="#c4c4c4" stroke-width="2.4"/><path d="M1290.3 840.0H1295.9" stroke="#c4c4c4" stroke-width="1.3"/><path d="M1293.1 837.2V842.8" stroke="#c4c4c4" stroke-width="1.3"/>
<path d="M1321.7 831.0H1339.4" stroke="#4b4b4b" stroke-width="1.5"/><path d="M1319.7 831.0L1323.9 828.2V833.8ZM1341.4 831.0L1337.2 828.2V833.8Z" fill="#4b4b4b"/><circle cx="1330.7" cy="840.0" r="5" fill="none" stroke="#4b4b4b" stroke-width="1.6"/><path d="M1334.5 843.8L1339.0 847.8" stroke="#4b4b4b" stroke-width="2.4"/><path d="M1327.9 840.0H1333.5" stroke="#4b4b4b" stroke-width="1.3"/>
<circle cx="1366.6" cy="838.8" r="5" fill="none" stroke="#4b4b4b" stroke-width="1.6"/><path d="M1370.4 842.6L1374.9 846.6" stroke="#4b4b4b" stroke-width="2.4"/><path d="M1363.8 838.8H1369.4" stroke="#4b4b4b" stroke-width="1.3"/><path d="M1366.6 828.5L1369.2 831.3H1364ZM1366.6 849.2L1369.2 846.4H1364ZM1356.4 838.8L1359.2 836.2V841.4ZM1376.8 838.8L1374 836.2V841.4Z" fill="#4b4b4b"/>
<path d="M1397.1 833.6C1395.3 835.1 1398.1 838.2 1393.1 840.7C1398.1 843.2 1395.3 846.2 1397.1 847.7" fill="none" stroke="#c4c4c4" stroke-width="1.6"/><circle cx="1408.4" cy="839.4" r="5" fill="none" stroke="#c4c4c4" stroke-width="1.6"/><path d="M1412.2 843.2L1416.7 847.2" stroke="#c4c4c4" stroke-width="2.4"/>
<path d="M1434.0 833.6C1435.8 835.1 1433.0 838.2 1438.0 840.7C1433.0 843.2 1435.8 846.2 1434.0 847.7" fill="none" stroke="#c4c4c4" stroke-width="1.6"/><circle cx="1445.4" cy="839.4" r="5" fill="none" stroke="#c4c4c4" stroke-width="1.6"/><path d="M1449.2 843.2L1453.7 847.2" stroke="#c4c4c4" stroke-width="2.4"/>
<path d="M1469.0 833.6C1467.2 835.1 1470.0 838.2 1465.0 840.7C1470.0 843.2 1467.2 846.2 1469.0 847.7" fill="none" stroke="#c4c4c4" stroke-width="1.6"/><path d="M1472.2 833.6C1474.0 835.1 1471.2 838.2 1476.2 840.7C1471.2 843.2 1474.0 846.2 1472.2 847.7" fill="none" stroke="#c4c4c4" stroke-width="1.6"/><circle cx="1483.0" cy="839.4" r="5" fill="none" stroke="#c4c4c4" stroke-width="1.6"/><path d="M1486.8 843.2L1491.3 847.2" stroke="#c4c4c4" stroke-width="2.4"/>
<path d="M1505.5 831H1511.5M1505.5 848.2H1511.5" stroke="#4b4b4b" stroke-width="1.4"/><path d="M1508.5 834.5V844.7" stroke="#4b4b4b" stroke-width="1.5"/><path d="M1508.5 832.5L1511.3 836.7H1505.7ZM1508.5 846.7L1511.3 842.5H1505.7Z" fill="#4b4b4b"/><circle cx="1517.4" cy="839.6" r="5" fill="none" stroke="#4b4b4b" stroke-width="1.6"/><path d="M1521.2 843.4L1525.7 847.4" stroke="#4b4b4b" stroke-width="2.4"/><path d="M1514.6 839.6H1520.2" stroke="#4b4b4b" stroke-width="1.3"/><path d="M1517.4 836.8V842.4" stroke="#4b4b4b" stroke-width="1.3"/>
</svg>
<!--/EDITOR-->
<!--CURSOR-->
<svg style="left:295px;top:42px" width="17.6" height="26.4" viewBox="0 0 16 24"><path d="M1 1V18.2L5 14.4L7.9 21.2L10.6 20L7.7 13.4H13.4Z" fill="#fff" stroke="#000" stroke-width="1" stroke-linejoin="miter"/></svg>
<!--/CURSOR-->
</div>
</body>
</html>
